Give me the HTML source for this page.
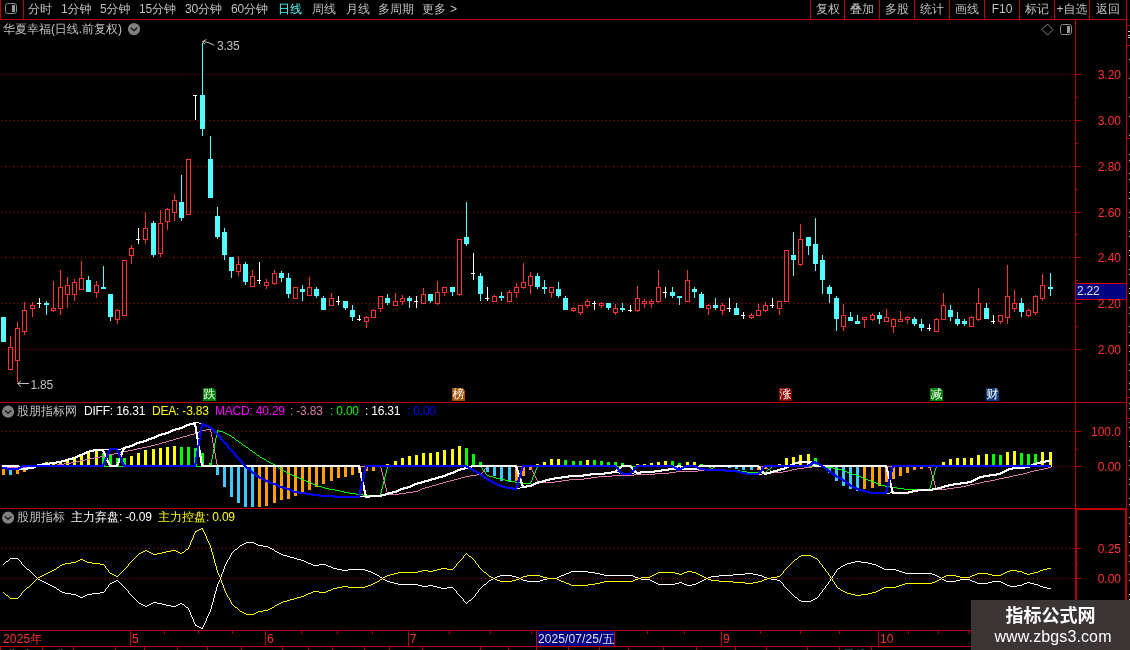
<!DOCTYPE html>
<html><head><meta charset="utf-8"><title>chart</title>
<style>
html,body{margin:0;padding:0;background:#000;}
body{width:1130px;height:650px;position:relative;overflow:hidden;font-family:"Liberation Sans","WenQuanYi Zen Hei",sans-serif;}
svg{position:absolute;left:0;top:0}
#txt{position:absolute;left:0;top:0;width:1130px;height:650px;will-change:transform}
.t{position:absolute;white-space:nowrap;font-size:12px;line-height:14px;color:#c0c0c0;}
.t i{font-style:normal;letter-spacing:-0.2px}
.ax{left:1076px;width:45px;text-align:right;color:#ff3232}
.mk{width:13px;height:13px;line-height:13px;text-align:center;color:#fff;font-size:12px}
#wm{will-change:transform;position:absolute;left:971px;top:600px;width:159px;height:50px;background:#3b3535;color:#fff;text-align:center}
#wm b{display:block;font-size:18px;line-height:20px;margin-top:6px;font-family:"Liberation Sans","Noto Sans CJK SC",sans-serif}
#wm span{display:block;font-size:16px;line-height:18px;margin-top:2px;padding-left:5px;letter-spacing:0.12px}
</style></head><body>
<svg width="1130" height="650" viewBox="0 0 1130 650" shape-rendering="crispEdges">
<defs><pattern id="dot" x="1" y="0" width="4" height="1" patternUnits="userSpaceOnUse"><rect x="0" y="0" width="1" height="1" fill="#ba0000"/></pattern></defs>
<rect x="0" y="74" width="1075" height="1" fill="url(#dot)"/>
<rect x="0" y="120" width="1075" height="1" fill="url(#dot)"/>
<rect x="0" y="166" width="1075" height="1" fill="url(#dot)"/>
<rect x="0" y="212" width="1075" height="1" fill="url(#dot)"/>
<rect x="0" y="257" width="1075" height="1" fill="url(#dot)"/>
<rect x="0" y="303" width="1075" height="1" fill="url(#dot)"/>
<rect x="0" y="349" width="1075" height="1" fill="url(#dot)"/>
<rect x="0" y="431" width="1075" height="1" fill="url(#dot)"/>
<rect x="0" y="466" width="1075" height="1" fill="url(#dot)"/>
<rect x="0" y="548" width="1075" height="1" fill="url(#dot)"/>
<rect x="0" y="578" width="1075" height="1" fill="url(#dot)"/>
<rect x="0" y="19" width="1127" height="1" fill="#ba0000"/>
<rect x="0" y="0" width="1" height="20" fill="#ba0000"/>
<rect x="23" y="0" width="1" height="20" fill="#ba0000"/>
<rect x="810" y="0" width="1" height="20" fill="#ba0000"/>
<rect x="844" y="0" width="1" height="20" fill="#ba0000"/>
<rect x="879" y="0" width="1" height="20" fill="#ba0000"/>
<rect x="914" y="0" width="1" height="20" fill="#ba0000"/>
<rect x="949" y="0" width="1" height="20" fill="#ba0000"/>
<rect x="984" y="0" width="1" height="20" fill="#ba0000"/>
<rect x="1019" y="0" width="1" height="20" fill="#ba0000"/>
<rect x="1054" y="0" width="1" height="20" fill="#ba0000"/>
<rect x="1089" y="0" width="1" height="20" fill="#ba0000"/>
<rect x="1075" y="19" width="1" height="627" fill="#ba0000"/>
<rect x="1126" y="0" width="1" height="600" fill="#ba0000"/>
<rect x="0" y="402" width="1127" height="1" fill="#ba0000"/>
<rect x="0" y="508" width="1076" height="1" fill="#ba0000"/>
<rect x="1075" y="508" width="52" height="2" fill="#ba0000"/>
<rect x="1075" y="508" width="2" height="138" fill="#ba0000"/>
<rect x="1125" y="508" width="2" height="92" fill="#ba0000"/>
<rect x="1127" y="25" width="3" height="1" fill="#ba0000"/>
<rect x="1127" y="45" width="3" height="1" fill="#ba0000"/>
<rect x="1129" y="59" width="1" height="1" fill="#c8c8c8"/>
<rect x="1129" y="160" width="1" height="1" fill="#c8c8c8"/>
<rect x="1129" y="78" width="1" height="1" fill="#c8c8c8"/>
<rect x="1129" y="179" width="1" height="1" fill="#c8c8c8"/>
<rect x="1129" y="97" width="1" height="1" fill="#c8c8c8"/>
<rect x="1129" y="198" width="1" height="1" fill="#c8c8c8"/>
<rect x="1129" y="116" width="1" height="1" fill="#c8c8c8"/>
<rect x="1129" y="217" width="1" height="1" fill="#c8c8c8"/>
<rect x="1129" y="135" width="1" height="1" fill="#c8c8c8"/>
<rect x="1129" y="236" width="1" height="1" fill="#c8c8c8"/>
<rect x="1129" y="154" width="1" height="1" fill="#c8c8c8"/>
<rect x="1129" y="255" width="1" height="1" fill="#c8c8c8"/>
<rect x="1129" y="173" width="1" height="1" fill="#c8c8c8"/>
<rect x="1129" y="274" width="1" height="1" fill="#c8c8c8"/>
<rect x="1129" y="192" width="1" height="1" fill="#c8c8c8"/>
<rect x="1129" y="293" width="1" height="1" fill="#c8c8c8"/>
<rect x="1129" y="212" width="1" height="1" fill="#c8c8c8"/>
<rect x="1129" y="313" width="1" height="1" fill="#c8c8c8"/>
<rect x="1129" y="231" width="1" height="1" fill="#c8c8c8"/>
<rect x="1129" y="332" width="1" height="1" fill="#c8c8c8"/>
<rect x="1129" y="250" width="1" height="1" fill="#c8c8c8"/>
<rect x="1129" y="351" width="1" height="1" fill="#c8c8c8"/>
<rect x="1129" y="269" width="1" height="1" fill="#c8c8c8"/>
<rect x="1129" y="370" width="1" height="1" fill="#c8c8c8"/>
<rect x="1129" y="288" width="1" height="1" fill="#c8c8c8"/>
<rect x="1129" y="389" width="1" height="1" fill="#c8c8c8"/>
<rect x="1129" y="307" width="1" height="1" fill="#c8c8c8"/>
<rect x="1129" y="408" width="1" height="1" fill="#c8c8c8"/>
<rect x="1129" y="326" width="1" height="1" fill="#c8c8c8"/>
<rect x="1129" y="427" width="1" height="1" fill="#c8c8c8"/>
<rect x="1129" y="345" width="1" height="1" fill="#c8c8c8"/>
<rect x="1129" y="446" width="1" height="1" fill="#c8c8c8"/>
<rect x="1129" y="364" width="1" height="1" fill="#c8c8c8"/>
<rect x="1129" y="465" width="1" height="1" fill="#c8c8c8"/>
<rect x="1129" y="383" width="1" height="1" fill="#c8c8c8"/>
<rect x="1129" y="484" width="1" height="1" fill="#c8c8c8"/>
<rect x="1129" y="403" width="1" height="1" fill="#c8c8c8"/>
<rect x="1129" y="504" width="1" height="1" fill="#c8c8c8"/>
<rect x="1129" y="422" width="1" height="1" fill="#c8c8c8"/>
<rect x="1129" y="523" width="1" height="1" fill="#c8c8c8"/>
<rect x="1129" y="441" width="1" height="1" fill="#c8c8c8"/>
<rect x="1129" y="542" width="1" height="1" fill="#c8c8c8"/>
<rect x="1129" y="460" width="1" height="1" fill="#c8c8c8"/>
<rect x="1129" y="561" width="1" height="1" fill="#c8c8c8"/>
<rect x="1129" y="479" width="1" height="1" fill="#c8c8c8"/>
<rect x="1129" y="580" width="1" height="1" fill="#c8c8c8"/>
<rect x="1129" y="498" width="1" height="1" fill="#c8c8c8"/>
<rect x="1129" y="599" width="1" height="1" fill="#c8c8c8"/>
<rect x="1129" y="517" width="1" height="1" fill="#c8c8c8"/>
<rect x="1129" y="536" width="1" height="1" fill="#c8c8c8"/>
<rect x="1129" y="555" width="1" height="1" fill="#c8c8c8"/>
<rect x="1129" y="574" width="1" height="1" fill="#c8c8c8"/>
<rect x="1129" y="594" width="1" height="1" fill="#c8c8c8"/>
<rect x="1127" y="138" width="3" height="1" fill="#ba0000"/>
<rect x="1127" y="397" width="3" height="1" fill="#ba0000"/>
<rect x="1127" y="418" width="3" height="1" fill="#ba0000"/>
<rect x="1128" y="31" width="2" height="1" fill="#c8c8c8"/>
<rect x="1128" y="35" width="2" height="1" fill="#c8c8c8"/>
<rect x="1128" y="37" width="2" height="1" fill="#c8c8c8"/>
<rect x="0" y="630" width="1130" height="1" fill="#ba0000"/>
<rect x="0" y="646" width="1130" height="1" fill="#ba0000"/>
<rect x="1075" y="74" width="6" height="1" fill="#ba0000"/>
<rect x="1075" y="120" width="6" height="1" fill="#ba0000"/>
<rect x="1075" y="166" width="6" height="1" fill="#ba0000"/>
<rect x="1075" y="212" width="6" height="1" fill="#ba0000"/>
<rect x="1075" y="257" width="6" height="1" fill="#ba0000"/>
<rect x="1075" y="303" width="6" height="1" fill="#ba0000"/>
<rect x="1075" y="349" width="6" height="1" fill="#ba0000"/>
<rect x="1075" y="97" width="3" height="1" fill="#ba0000"/>
<rect x="1075" y="143" width="3" height="1" fill="#ba0000"/>
<rect x="1075" y="189" width="3" height="1" fill="#ba0000"/>
<rect x="1075" y="234" width="3" height="1" fill="#ba0000"/>
<rect x="1075" y="280" width="3" height="1" fill="#ba0000"/>
<rect x="1075" y="326" width="3" height="1" fill="#ba0000"/>
<rect x="1075" y="431" width="6" height="1" fill="#ba0000"/>
<rect x="1075" y="466" width="6" height="1" fill="#ba0000"/>
<rect x="1075" y="449" width="3" height="1" fill="#ba0000"/>
<rect x="1076" y="548" width="5" height="1" fill="#ba0000"/>
<rect x="1076" y="578" width="5" height="1" fill="#ba0000"/>
<rect x="1076" y="563" width="2" height="1" fill="#ba0000"/>
<rect x="3" y="317" width="1" height="25" fill="#54ffff"/>
<rect x="1" y="317" width="5" height="25" fill="#54ffff"/>
<rect x="10" y="336" width="1" height="11" fill="#ff3232"/>
<rect x="8.5" y="347.5" width="4" height="22" fill="none" stroke="#ff3232" stroke-width="1"/>
<rect x="17" y="322" width="1" height="6" fill="#ff3232"/>
<rect x="17" y="361" width="1" height="21" fill="#ff3232"/>
<rect x="15.5" y="328.5" width="4" height="32" fill="none" stroke="#ff3232" stroke-width="1"/>
<rect x="24" y="302" width="1" height="8" fill="#ff3232"/>
<rect x="24" y="332" width="1" height="3" fill="#ff3232"/>
<rect x="22.5" y="310.5" width="4" height="21" fill="none" stroke="#ff3232" stroke-width="1"/>
<rect x="32" y="302" width="1" height="3" fill="#ff3232"/>
<rect x="32" y="309" width="1" height="8" fill="#ff3232"/>
<rect x="30.5" y="305.5" width="4" height="3" fill="none" stroke="#ff3232" stroke-width="1"/>
<rect x="39" y="298" width="1" height="10" fill="#fff"/>
<rect x="37" y="303" width="4" height="1" fill="#fff"/>
<rect x="46" y="301" width="1" height="14" fill="#54ffff"/>
<rect x="44" y="303" width="5" height="2" fill="#54ffff"/>
<rect x="53" y="281" width="1" height="27" fill="#ff3232"/>
<rect x="53" y="311" width="1" height="1" fill="#ff3232"/>
<rect x="51.5" y="308.5" width="4" height="2" fill="none" stroke="#ff3232" stroke-width="1"/>
<rect x="60" y="270" width="1" height="17" fill="#ff3232"/>
<rect x="60" y="309" width="1" height="6" fill="#ff3232"/>
<rect x="58.5" y="287.5" width="4" height="21" fill="none" stroke="#ff3232" stroke-width="1"/>
<rect x="67" y="277" width="1" height="8" fill="#ff3232"/>
<rect x="67" y="295" width="1" height="13" fill="#ff3232"/>
<rect x="65.5" y="285.5" width="4" height="9" fill="none" stroke="#ff3232" stroke-width="1"/>
<rect x="74" y="279" width="1" height="3" fill="#ff3232"/>
<rect x="74" y="295" width="1" height="6" fill="#ff3232"/>
<rect x="72.5" y="282.5" width="4" height="12" fill="none" stroke="#ff3232" stroke-width="1"/>
<rect x="81" y="261" width="1" height="17" fill="#ff3232"/>
<rect x="79.5" y="278.5" width="4" height="11" fill="none" stroke="#ff3232" stroke-width="1"/>
<rect x="88" y="276" width="1" height="16" fill="#54ffff"/>
<rect x="86" y="280" width="5" height="12" fill="#54ffff"/>
<rect x="96" y="281" width="1" height="4" fill="#ff3232"/>
<rect x="96" y="293" width="1" height="5" fill="#ff3232"/>
<rect x="94.5" y="285.5" width="4" height="7" fill="none" stroke="#ff3232" stroke-width="1"/>
<rect x="103" y="266" width="1" height="23" fill="#54ffff"/>
<rect x="101" y="287" width="5" height="2" fill="#54ffff"/>
<rect x="110" y="294" width="1" height="27" fill="#54ffff"/>
<rect x="108" y="294" width="5" height="23" fill="#54ffff"/>
<rect x="117" y="309" width="1" height="1" fill="#ff3232"/>
<rect x="117" y="320" width="1" height="4" fill="#ff3232"/>
<rect x="115.5" y="310.5" width="4" height="9" fill="none" stroke="#ff3232" stroke-width="1"/>
<rect x="122.5" y="260.5" width="4" height="55" fill="none" stroke="#ff3232" stroke-width="1"/>
<rect x="131" y="245" width="1" height="3" fill="#ff3232"/>
<rect x="131" y="256" width="1" height="8" fill="#ff3232"/>
<rect x="129.5" y="248.5" width="4" height="7" fill="none" stroke="#ff3232" stroke-width="1"/>
<rect x="138" y="228" width="1" height="16" fill="#fff"/>
<rect x="136" y="239" width="4" height="1" fill="#fff"/>
<rect x="145" y="212" width="1" height="16" fill="#ff3232"/>
<rect x="145" y="240" width="1" height="4" fill="#ff3232"/>
<rect x="143.5" y="228.5" width="4" height="11" fill="none" stroke="#ff3232" stroke-width="1"/>
<rect x="153" y="221" width="1" height="36" fill="#54ffff"/>
<rect x="151" y="223" width="5" height="32" fill="#54ffff"/>
<rect x="160" y="210" width="1" height="13" fill="#ff3232"/>
<rect x="160" y="254" width="1" height="3" fill="#ff3232"/>
<rect x="158.5" y="223.5" width="4" height="30" fill="none" stroke="#ff3232" stroke-width="1"/>
<rect x="167" y="208" width="1" height="1" fill="#ff3232"/>
<rect x="167" y="222" width="1" height="8" fill="#ff3232"/>
<rect x="165.5" y="209.5" width="4" height="12" fill="none" stroke="#ff3232" stroke-width="1"/>
<rect x="174" y="194" width="1" height="6" fill="#ff3232"/>
<rect x="174" y="213" width="1" height="8" fill="#ff3232"/>
<rect x="172.5" y="200.5" width="4" height="12" fill="none" stroke="#ff3232" stroke-width="1"/>
<rect x="181" y="175" width="1" height="46" fill="#54ffff"/>
<rect x="179" y="202" width="5" height="16" fill="#54ffff"/>
<rect x="186.5" y="159.5" width="4" height="55" fill="none" stroke="#ff3232" stroke-width="1"/>
<rect x="195" y="95" width="1" height="25" fill="#fff"/>
<rect x="193" y="95" width="4" height="1" fill="#fff"/>
<rect x="202" y="43" width="1" height="93" fill="#54ffff"/>
<rect x="200" y="95" width="5" height="34" fill="#54ffff"/>
<rect x="210" y="136" width="1" height="62" fill="#54ffff"/>
<rect x="208" y="159" width="5" height="39" fill="#54ffff"/>
<rect x="217" y="207" width="1" height="32" fill="#54ffff"/>
<rect x="215" y="216" width="5" height="21" fill="#54ffff"/>
<rect x="224" y="228" width="1" height="32" fill="#54ffff"/>
<rect x="222" y="232" width="5" height="23" fill="#54ffff"/>
<rect x="231" y="257" width="1" height="21" fill="#54ffff"/>
<rect x="229" y="257" width="5" height="14" fill="#54ffff"/>
<rect x="238" y="256" width="1" height="8" fill="#ff3232"/>
<rect x="238" y="272" width="1" height="4" fill="#ff3232"/>
<rect x="236.5" y="264.5" width="4" height="7" fill="none" stroke="#ff3232" stroke-width="1"/>
<rect x="245" y="262" width="1" height="23" fill="#54ffff"/>
<rect x="243" y="264" width="5" height="18" fill="#54ffff"/>
<rect x="252" y="270" width="1" height="6" fill="#ff3232"/>
<rect x="250.5" y="276.5" width="4" height="10" fill="none" stroke="#ff3232" stroke-width="1"/>
<rect x="259" y="262" width="1" height="22" fill="#fff"/>
<rect x="257" y="280" width="4" height="1" fill="#fff"/>
<rect x="266" y="279" width="1" height="3" fill="#ff3232"/>
<rect x="266" y="286" width="1" height="3" fill="#ff3232"/>
<rect x="264.5" y="282.5" width="4" height="3" fill="none" stroke="#ff3232" stroke-width="1"/>
<rect x="274" y="270" width="1" height="3" fill="#ff3232"/>
<rect x="274" y="284" width="1" height="1" fill="#ff3232"/>
<rect x="272.5" y="273.5" width="4" height="10" fill="none" stroke="#ff3232" stroke-width="1"/>
<rect x="281" y="271" width="1" height="11" fill="#54ffff"/>
<rect x="279" y="273" width="5" height="5" fill="#54ffff"/>
<rect x="288" y="273" width="1" height="25" fill="#54ffff"/>
<rect x="286" y="278" width="5" height="16" fill="#54ffff"/>
<rect x="293.5" y="287.5" width="4" height="11" fill="none" stroke="#ff3232" stroke-width="1"/>
<rect x="302" y="285" width="1" height="16" fill="#54ffff"/>
<rect x="300" y="289" width="5" height="3" fill="#54ffff"/>
<rect x="309" y="277" width="1" height="10" fill="#ff3232"/>
<rect x="307.5" y="287.5" width="4" height="8" fill="none" stroke="#ff3232" stroke-width="1"/>
<rect x="316" y="287" width="1" height="11" fill="#54ffff"/>
<rect x="314" y="289" width="5" height="7" fill="#54ffff"/>
<rect x="323" y="296" width="1" height="14" fill="#54ffff"/>
<rect x="321" y="298" width="5" height="12" fill="#54ffff"/>
<rect x="331" y="293" width="1" height="5" fill="#ff3232"/>
<rect x="329.5" y="298.5" width="4" height="7" fill="none" stroke="#ff3232" stroke-width="1"/>
<rect x="338" y="296" width="1" height="9" fill="#fff"/>
<rect x="336" y="301" width="4" height="1" fill="#fff"/>
<rect x="345" y="301" width="1" height="9" fill="#54ffff"/>
<rect x="343" y="301" width="5" height="7" fill="#54ffff"/>
<rect x="352" y="305" width="1" height="16" fill="#54ffff"/>
<rect x="350" y="310" width="5" height="7" fill="#54ffff"/>
<rect x="359" y="315" width="1" height="6" fill="#fff"/>
<rect x="357" y="319" width="4" height="1" fill="#fff"/>
<rect x="366" y="316" width="1" height="1" fill="#ff3232"/>
<rect x="366" y="322" width="1" height="6" fill="#ff3232"/>
<rect x="364.5" y="317.5" width="4" height="4" fill="none" stroke="#ff3232" stroke-width="1"/>
<rect x="373" y="309" width="1" height="1" fill="#ff3232"/>
<rect x="371.5" y="310.5" width="4" height="7" fill="none" stroke="#ff3232" stroke-width="1"/>
<rect x="380" y="309" width="1" height="3" fill="#ff3232"/>
<rect x="378.5" y="296.5" width="4" height="12" fill="none" stroke="#ff3232" stroke-width="1"/>
<rect x="387" y="294" width="1" height="11" fill="#54ffff"/>
<rect x="385" y="298" width="5" height="5" fill="#54ffff"/>
<rect x="395" y="293" width="1" height="8" fill="#ff3232"/>
<rect x="393.5" y="301.5" width="4" height="4" fill="none" stroke="#ff3232" stroke-width="1"/>
<rect x="402" y="295" width="1" height="3" fill="#ff3232"/>
<rect x="402" y="302" width="1" height="3" fill="#ff3232"/>
<rect x="400.5" y="298.5" width="4" height="3" fill="none" stroke="#ff3232" stroke-width="1"/>
<rect x="409" y="296" width="1" height="12" fill="#54ffff"/>
<rect x="407" y="298" width="5" height="3" fill="#54ffff"/>
<rect x="416" y="296" width="1" height="12" fill="#fff"/>
<rect x="414" y="301" width="4" height="1" fill="#fff"/>
<rect x="423" y="288" width="1" height="6" fill="#ff3232"/>
<rect x="421.5" y="294.5" width="4" height="9" fill="none" stroke="#ff3232" stroke-width="1"/>
<rect x="430" y="294" width="1" height="9" fill="#54ffff"/>
<rect x="428" y="294" width="5" height="7" fill="#54ffff"/>
<rect x="437" y="281" width="1" height="11" fill="#ff3232"/>
<rect x="437" y="304" width="1" height="1" fill="#ff3232"/>
<rect x="435.5" y="292.5" width="4" height="11" fill="none" stroke="#ff3232" stroke-width="1"/>
<rect x="444" y="293" width="1" height="3" fill="#ff3232"/>
<rect x="442.5" y="287.5" width="4" height="5" fill="none" stroke="#ff3232" stroke-width="1"/>
<rect x="452" y="287" width="1" height="9" fill="#54ffff"/>
<rect x="450" y="287" width="5" height="5" fill="#54ffff"/>
<rect x="459" y="295" width="1" height="1" fill="#ff3232"/>
<rect x="457.5" y="239.5" width="4" height="55" fill="none" stroke="#ff3232" stroke-width="1"/>
<rect x="466" y="202" width="1" height="44" fill="#54ffff"/>
<rect x="464" y="237" width="5" height="7" fill="#54ffff"/>
<rect x="473" y="253" width="1" height="27" fill="#fff"/>
<rect x="471" y="273" width="4" height="1" fill="#fff"/>
<rect x="480" y="273" width="1" height="28" fill="#54ffff"/>
<rect x="478" y="276" width="5" height="18" fill="#54ffff"/>
<rect x="487" y="287" width="1" height="14" fill="#fff"/>
<rect x="485" y="298" width="4" height="1" fill="#fff"/>
<rect x="494" y="295" width="1" height="1" fill="#ff3232"/>
<rect x="492.5" y="296.5" width="4" height="5" fill="none" stroke="#ff3232" stroke-width="1"/>
<rect x="501" y="292" width="1" height="9" fill="#54ffff"/>
<rect x="499" y="296" width="5" height="2" fill="#54ffff"/>
<rect x="509" y="290" width="1" height="2" fill="#ff3232"/>
<rect x="507.5" y="292.5" width="4" height="9" fill="none" stroke="#ff3232" stroke-width="1"/>
<rect x="516" y="283" width="1" height="4" fill="#ff3232"/>
<rect x="516" y="293" width="1" height="5" fill="#ff3232"/>
<rect x="514.5" y="287.5" width="4" height="5" fill="none" stroke="#ff3232" stroke-width="1"/>
<rect x="523" y="263" width="1" height="19" fill="#ff3232"/>
<rect x="523" y="288" width="1" height="1" fill="#ff3232"/>
<rect x="521.5" y="282.5" width="4" height="5" fill="none" stroke="#ff3232" stroke-width="1"/>
<rect x="530" y="272" width="1" height="4" fill="#ff3232"/>
<rect x="530" y="286" width="1" height="8" fill="#ff3232"/>
<rect x="528.5" y="276.5" width="4" height="9" fill="none" stroke="#ff3232" stroke-width="1"/>
<rect x="537" y="273" width="1" height="16" fill="#54ffff"/>
<rect x="535" y="276" width="5" height="11" fill="#54ffff"/>
<rect x="544" y="280" width="1" height="14" fill="#54ffff"/>
<rect x="542" y="287" width="5" height="2" fill="#54ffff"/>
<rect x="551" y="293" width="1" height="5" fill="#ff3232"/>
<rect x="549.5" y="287.5" width="4" height="5" fill="none" stroke="#ff3232" stroke-width="1"/>
<rect x="558" y="282" width="1" height="16" fill="#54ffff"/>
<rect x="556" y="289" width="5" height="7" fill="#54ffff"/>
<rect x="565" y="296" width="1" height="14" fill="#54ffff"/>
<rect x="563" y="298" width="5" height="12" fill="#54ffff"/>
<rect x="573" y="307" width="1" height="1" fill="#ff3232"/>
<rect x="573" y="311" width="1" height="1" fill="#ff3232"/>
<rect x="571.5" y="308.5" width="4" height="2" fill="none" stroke="#ff3232" stroke-width="1"/>
<rect x="580" y="313" width="1" height="2" fill="#ff3232"/>
<rect x="578.5" y="305.5" width="4" height="7" fill="none" stroke="#ff3232" stroke-width="1"/>
<rect x="587" y="299" width="1" height="2" fill="#ff3232"/>
<rect x="587" y="306" width="1" height="2" fill="#ff3232"/>
<rect x="585.5" y="301.5" width="4" height="4" fill="none" stroke="#ff3232" stroke-width="1"/>
<rect x="594" y="301" width="1" height="9" fill="#fff"/>
<rect x="592" y="303" width="4" height="1" fill="#fff"/>
<rect x="601" y="302" width="1" height="1" fill="#ff3232"/>
<rect x="601" y="306" width="1" height="2" fill="#ff3232"/>
<rect x="599.5" y="303.5" width="4" height="2" fill="none" stroke="#ff3232" stroke-width="1"/>
<rect x="608" y="303" width="1" height="7" fill="#54ffff"/>
<rect x="606" y="303" width="5" height="5" fill="#54ffff"/>
<rect x="615" y="304" width="1" height="4" fill="#ff3232"/>
<rect x="615" y="313" width="1" height="2" fill="#ff3232"/>
<rect x="613.5" y="308.5" width="4" height="4" fill="none" stroke="#ff3232" stroke-width="1"/>
<rect x="622" y="303" width="1" height="9" fill="#54ffff"/>
<rect x="620" y="308" width="5" height="2" fill="#54ffff"/>
<rect x="630" y="305" width="1" height="7" fill="#fff"/>
<rect x="628" y="310" width="4" height="1" fill="#fff"/>
<rect x="637" y="286" width="1" height="12" fill="#ff3232"/>
<rect x="637" y="311" width="1" height="1" fill="#ff3232"/>
<rect x="635.5" y="298.5" width="4" height="12" fill="none" stroke="#ff3232" stroke-width="1"/>
<rect x="644" y="299" width="1" height="2" fill="#ff3232"/>
<rect x="644" y="304" width="1" height="4" fill="#ff3232"/>
<rect x="642.5" y="301.5" width="4" height="2" fill="none" stroke="#ff3232" stroke-width="1"/>
<rect x="651" y="299" width="1" height="2" fill="#ff3232"/>
<rect x="651" y="304" width="1" height="4" fill="#ff3232"/>
<rect x="649.5" y="301.5" width="4" height="2" fill="none" stroke="#ff3232" stroke-width="1"/>
<rect x="658" y="270" width="1" height="17" fill="#ff3232"/>
<rect x="658" y="302" width="1" height="1" fill="#ff3232"/>
<rect x="656.5" y="287.5" width="4" height="14" fill="none" stroke="#ff3232" stroke-width="1"/>
<rect x="665" y="287" width="1" height="11" fill="#fff"/>
<rect x="663" y="292" width="4" height="1" fill="#fff"/>
<rect x="672" y="287" width="1" height="11" fill="#54ffff"/>
<rect x="670" y="292" width="5" height="4" fill="#54ffff"/>
<rect x="679" y="296" width="1" height="9" fill="#54ffff"/>
<rect x="677" y="296" width="5" height="2" fill="#54ffff"/>
<rect x="687" y="270" width="1" height="10" fill="#ff3232"/>
<rect x="685.5" y="280.5" width="4" height="21" fill="none" stroke="#ff3232" stroke-width="1"/>
<rect x="694" y="287" width="1" height="11" fill="#54ffff"/>
<rect x="692" y="289" width="5" height="3" fill="#54ffff"/>
<rect x="701" y="292" width="1" height="16" fill="#54ffff"/>
<rect x="699" y="294" width="5" height="14" fill="#54ffff"/>
<rect x="708" y="304" width="1" height="1" fill="#ff3232"/>
<rect x="708" y="309" width="1" height="6" fill="#ff3232"/>
<rect x="706.5" y="305.5" width="4" height="3" fill="none" stroke="#ff3232" stroke-width="1"/>
<rect x="715" y="298" width="1" height="12" fill="#54ffff"/>
<rect x="713" y="305" width="5" height="3" fill="#54ffff"/>
<rect x="722" y="303" width="1" height="2" fill="#ff3232"/>
<rect x="722" y="311" width="1" height="4" fill="#ff3232"/>
<rect x="720.5" y="305.5" width="4" height="5" fill="none" stroke="#ff3232" stroke-width="1"/>
<rect x="729" y="298" width="1" height="14" fill="#fff"/>
<rect x="727" y="308" width="4" height="1" fill="#fff"/>
<rect x="736" y="303" width="1" height="12" fill="#54ffff"/>
<rect x="734" y="308" width="5" height="7" fill="#54ffff"/>
<rect x="743" y="312" width="1" height="7" fill="#fff"/>
<rect x="741" y="315" width="4" height="1" fill="#fff"/>
<rect x="751" y="313" width="1" height="2" fill="#ff3232"/>
<rect x="751" y="318" width="1" height="1" fill="#ff3232"/>
<rect x="749.5" y="315.5" width="4" height="2" fill="none" stroke="#ff3232" stroke-width="1"/>
<rect x="758" y="304" width="1" height="6" fill="#ff3232"/>
<rect x="756.5" y="310.5" width="4" height="5" fill="none" stroke="#ff3232" stroke-width="1"/>
<rect x="765" y="302" width="1" height="3" fill="#ff3232"/>
<rect x="765" y="311" width="1" height="1" fill="#ff3232"/>
<rect x="763.5" y="305.5" width="4" height="5" fill="none" stroke="#ff3232" stroke-width="1"/>
<rect x="772" y="298" width="1" height="10" fill="#fff"/>
<rect x="770" y="305" width="4" height="1" fill="#fff"/>
<rect x="779" y="309" width="1" height="6" fill="#ff3232"/>
<rect x="777.5" y="301.5" width="4" height="7" fill="none" stroke="#ff3232" stroke-width="1"/>
<rect x="784.5" y="250.5" width="4" height="51" fill="none" stroke="#ff3232" stroke-width="1"/>
<rect x="793" y="232" width="1" height="44" fill="#54ffff"/>
<rect x="791" y="255" width="5" height="5" fill="#54ffff"/>
<rect x="800" y="224" width="1" height="15" fill="#ff3232"/>
<rect x="800" y="265" width="1" height="1" fill="#ff3232"/>
<rect x="798.5" y="239.5" width="4" height="25" fill="none" stroke="#ff3232" stroke-width="1"/>
<rect x="808" y="237" width="1" height="18" fill="#54ffff"/>
<rect x="806" y="237" width="5" height="9" fill="#54ffff"/>
<rect x="815" y="218" width="1" height="53" fill="#54ffff"/>
<rect x="813" y="244" width="5" height="20" fill="#54ffff"/>
<rect x="822" y="255" width="1" height="39" fill="#54ffff"/>
<rect x="820" y="260" width="5" height="20" fill="#54ffff"/>
<rect x="829" y="285" width="1" height="18" fill="#54ffff"/>
<rect x="827" y="287" width="5" height="7" fill="#54ffff"/>
<rect x="836" y="296" width="1" height="35" fill="#54ffff"/>
<rect x="834" y="298" width="5" height="21" fill="#54ffff"/>
<rect x="843" y="304" width="1" height="11" fill="#ff3232"/>
<rect x="843" y="327" width="1" height="4" fill="#ff3232"/>
<rect x="841.5" y="315.5" width="4" height="11" fill="none" stroke="#ff3232" stroke-width="1"/>
<rect x="850" y="312" width="1" height="9" fill="#54ffff"/>
<rect x="848" y="317" width="5" height="4" fill="#54ffff"/>
<rect x="857" y="315" width="1" height="9" fill="#54ffff"/>
<rect x="855" y="321" width="5" height="3" fill="#54ffff"/>
<rect x="864" y="320" width="1" height="8" fill="#ff3232"/>
<rect x="862.5" y="317.5" width="4" height="2" fill="none" stroke="#ff3232" stroke-width="1"/>
<rect x="872" y="313" width="1" height="2" fill="#ff3232"/>
<rect x="872" y="320" width="1" height="1" fill="#ff3232"/>
<rect x="870.5" y="315.5" width="4" height="4" fill="none" stroke="#ff3232" stroke-width="1"/>
<rect x="879" y="312" width="1" height="12" fill="#54ffff"/>
<rect x="877" y="315" width="5" height="4" fill="#54ffff"/>
<rect x="886" y="309" width="1" height="8" fill="#ff3232"/>
<rect x="884.5" y="317.5" width="4" height="4" fill="none" stroke="#ff3232" stroke-width="1"/>
<rect x="893" y="318" width="1" height="1" fill="#ff3232"/>
<rect x="893" y="327" width="1" height="6" fill="#ff3232"/>
<rect x="891.5" y="319.5" width="4" height="7" fill="none" stroke="#ff3232" stroke-width="1"/>
<rect x="900" y="311" width="1" height="8" fill="#ff3232"/>
<rect x="898.5" y="319.5" width="4" height="2" fill="none" stroke="#ff3232" stroke-width="1"/>
<rect x="907" y="316" width="1" height="1" fill="#ff3232"/>
<rect x="907" y="320" width="1" height="4" fill="#ff3232"/>
<rect x="905.5" y="317.5" width="4" height="2" fill="none" stroke="#ff3232" stroke-width="1"/>
<rect x="914" y="317" width="1" height="9" fill="#54ffff"/>
<rect x="912" y="319" width="5" height="5" fill="#54ffff"/>
<rect x="921" y="319" width="1" height="12" fill="#54ffff"/>
<rect x="919" y="324" width="5" height="4" fill="#54ffff"/>
<rect x="929" y="324" width="1" height="7" fill="#fff"/>
<rect x="927" y="328" width="4" height="1" fill="#fff"/>
<rect x="936" y="318" width="1" height="1" fill="#ff3232"/>
<rect x="934.5" y="319.5" width="4" height="12" fill="none" stroke="#ff3232" stroke-width="1"/>
<rect x="943" y="293" width="1" height="12" fill="#ff3232"/>
<rect x="941.5" y="305.5" width="4" height="14" fill="none" stroke="#ff3232" stroke-width="1"/>
<rect x="950" y="305" width="1" height="16" fill="#54ffff"/>
<rect x="948" y="310" width="5" height="7" fill="#54ffff"/>
<rect x="957" y="312" width="1" height="14" fill="#54ffff"/>
<rect x="955" y="319" width="5" height="5" fill="#54ffff"/>
<rect x="964" y="319" width="1" height="7" fill="#54ffff"/>
<rect x="962" y="321" width="5" height="3" fill="#54ffff"/>
<rect x="971" y="316" width="1" height="1" fill="#ff3232"/>
<rect x="969.5" y="317.5" width="4" height="9" fill="none" stroke="#ff3232" stroke-width="1"/>
<rect x="978" y="288" width="1" height="15" fill="#ff3232"/>
<rect x="978" y="320" width="1" height="1" fill="#ff3232"/>
<rect x="976.5" y="303.5" width="4" height="16" fill="none" stroke="#ff3232" stroke-width="1"/>
<rect x="986" y="303" width="1" height="16" fill="#54ffff"/>
<rect x="984" y="308" width="5" height="11" fill="#54ffff"/>
<rect x="993" y="315" width="1" height="9" fill="#fff"/>
<rect x="991" y="321" width="4" height="1" fill="#fff"/>
<rect x="1000" y="322" width="1" height="2" fill="#ff3232"/>
<rect x="998.5" y="315.5" width="4" height="6" fill="none" stroke="#ff3232" stroke-width="1"/>
<rect x="1007" y="265" width="1" height="31" fill="#ff3232"/>
<rect x="1007" y="318" width="1" height="6" fill="#ff3232"/>
<rect x="1005.5" y="296.5" width="4" height="21" fill="none" stroke="#ff3232" stroke-width="1"/>
<rect x="1014" y="290" width="1" height="13" fill="#ff3232"/>
<rect x="1014" y="309" width="1" height="3" fill="#ff3232"/>
<rect x="1012.5" y="303.5" width="4" height="5" fill="none" stroke="#ff3232" stroke-width="1"/>
<rect x="1021" y="298" width="1" height="19" fill="#54ffff"/>
<rect x="1019" y="303" width="5" height="9" fill="#54ffff"/>
<rect x="1028" y="309" width="1" height="1" fill="#ff3232"/>
<rect x="1028" y="316" width="1" height="1" fill="#ff3232"/>
<rect x="1026.5" y="310.5" width="4" height="5" fill="none" stroke="#ff3232" stroke-width="1"/>
<rect x="1035" y="295" width="1" height="1" fill="#ff3232"/>
<rect x="1035" y="313" width="1" height="2" fill="#ff3232"/>
<rect x="1033.5" y="296.5" width="4" height="16" fill="none" stroke="#ff3232" stroke-width="1"/>
<rect x="1042" y="274" width="1" height="11" fill="#ff3232"/>
<rect x="1042" y="299" width="1" height="2" fill="#ff3232"/>
<rect x="1040.5" y="285.5" width="4" height="13" fill="none" stroke="#ff3232" stroke-width="1"/>
<rect x="1050" y="273" width="1" height="23" fill="#54ffff"/>
<rect x="1048" y="287" width="5" height="2" fill="#54ffff"/>
<rect x="2" y="466" width="3" height="9" fill="#ffa000"/>
<rect x="9" y="466" width="3" height="9" fill="#3ccaff"/>
<rect x="16" y="466" width="3" height="8" fill="#ffa000"/>
<rect x="23" y="466" width="3" height="6" fill="#ffa000"/>
<rect x="31" y="466" width="3" height="2" fill="#ffa000"/>
<rect x="45" y="462" width="3" height="5" fill="#ffff00"/>
<rect x="52" y="462" width="3" height="5" fill="#ffff00"/>
<rect x="59" y="461" width="3" height="6" fill="#ffff00"/>
<rect x="66" y="460" width="3" height="7" fill="#ffff00"/>
<rect x="73" y="458" width="3" height="9" fill="#ffff00"/>
<rect x="80" y="456" width="3" height="11" fill="#ffff00"/>
<rect x="87" y="453" width="3" height="14" fill="#ffff00"/>
<rect x="95" y="451" width="3" height="16" fill="#ffff00"/>
<rect x="102" y="453" width="3" height="14" fill="#00ff00"/>
<rect x="109" y="455" width="3" height="12" fill="#00ff00"/>
<rect x="116" y="458" width="3" height="9" fill="#00ff00"/>
<rect x="123" y="458" width="3" height="9" fill="#00ff00"/>
<rect x="130" y="456" width="3" height="11" fill="#ffff00"/>
<rect x="137" y="453" width="3" height="14" fill="#ffff00"/>
<rect x="144" y="450" width="3" height="17" fill="#ffff00"/>
<rect x="152" y="449" width="3" height="18" fill="#ffff00"/>
<rect x="159" y="448" width="3" height="19" fill="#ffff00"/>
<rect x="166" y="447" width="3" height="20" fill="#ffff00"/>
<rect x="173" y="446" width="3" height="21" fill="#ffff00"/>
<rect x="180" y="447" width="3" height="20" fill="#00ff00"/>
<rect x="187" y="447" width="3" height="20" fill="#00ff00"/>
<rect x="194" y="448" width="3" height="19" fill="#00ff00"/>
<rect x="201" y="453" width="3" height="14" fill="#00ff00"/>
<rect x="209" y="463" width="3" height="4" fill="#00ff00"/>
<rect x="216" y="466" width="3" height="9" fill="#3ccaff"/>
<rect x="223" y="466" width="3" height="21" fill="#3ccaff"/>
<rect x="230" y="466" width="3" height="31" fill="#3ccaff"/>
<rect x="237" y="466" width="3" height="37" fill="#3ccaff"/>
<rect x="244" y="466" width="3" height="41" fill="#3ccaff"/>
<rect x="251" y="466" width="3" height="41" fill="#3ccaff"/>
<rect x="258" y="466" width="3" height="41" fill="#ffa000"/>
<rect x="265" y="466" width="3" height="40" fill="#ffa000"/>
<rect x="273" y="466" width="3" height="37" fill="#ffa000"/>
<rect x="280" y="466" width="3" height="34" fill="#ffa000"/>
<rect x="287" y="466" width="3" height="33" fill="#ffa000"/>
<rect x="294" y="466" width="3" height="30" fill="#ffa000"/>
<rect x="301" y="466" width="3" height="27" fill="#ffa000"/>
<rect x="308" y="466" width="3" height="24" fill="#ffa000"/>
<rect x="315" y="466" width="3" height="21" fill="#ffa000"/>
<rect x="322" y="466" width="3" height="18" fill="#ffa000"/>
<rect x="330" y="466" width="3" height="15" fill="#ffa000"/>
<rect x="337" y="466" width="3" height="12" fill="#ffa000"/>
<rect x="344" y="466" width="3" height="11" fill="#ffa000"/>
<rect x="351" y="466" width="3" height="9" fill="#ffa000"/>
<rect x="358" y="466" width="3" height="7" fill="#ffa000"/>
<rect x="365" y="466" width="3" height="5" fill="#ffa000"/>
<rect x="372" y="466" width="3" height="5" fill="#ffa000"/>
<rect x="386" y="464" width="3" height="3" fill="#ffff00"/>
<rect x="394" y="461" width="3" height="6" fill="#ffff00"/>
<rect x="401" y="458" width="3" height="9" fill="#ffff00"/>
<rect x="408" y="456" width="3" height="11" fill="#ffff00"/>
<rect x="415" y="455" width="3" height="12" fill="#ffff00"/>
<rect x="422" y="453" width="3" height="14" fill="#ffff00"/>
<rect x="429" y="453" width="3" height="14" fill="#ffff00"/>
<rect x="436" y="452" width="3" height="15" fill="#ffff00"/>
<rect x="443" y="450" width="3" height="17" fill="#ffff00"/>
<rect x="451" y="449" width="3" height="18" fill="#ffff00"/>
<rect x="458" y="446" width="3" height="21" fill="#ffff00"/>
<rect x="465" y="448" width="3" height="19" fill="#00ff00"/>
<rect x="472" y="454" width="3" height="13" fill="#00ff00"/>
<rect x="479" y="462" width="3" height="5" fill="#00ff00"/>
<rect x="486" y="466" width="3" height="6" fill="#3ccaff"/>
<rect x="493" y="466" width="3" height="10" fill="#3ccaff"/>
<rect x="500" y="466" width="3" height="15" fill="#3ccaff"/>
<rect x="508" y="466" width="3" height="16" fill="#3ccaff"/>
<rect x="515" y="466" width="3" height="15" fill="#ffa000"/>
<rect x="522" y="466" width="3" height="10" fill="#ffa000"/>
<rect x="529" y="466" width="3" height="4" fill="#ffa000"/>
<rect x="536" y="464" width="3" height="3" fill="#ffff00"/>
<rect x="543" y="462" width="3" height="5" fill="#ffff00"/>
<rect x="550" y="459" width="3" height="8" fill="#ffff00"/>
<rect x="557" y="459" width="3" height="8" fill="#ffff00"/>
<rect x="564" y="460" width="3" height="7" fill="#00ff00"/>
<rect x="572" y="461" width="3" height="6" fill="#00ff00"/>
<rect x="579" y="461" width="3" height="6" fill="#00ff00"/>
<rect x="586" y="460" width="3" height="7" fill="#ffff00"/>
<rect x="593" y="460" width="3" height="7" fill="#00ff00"/>
<rect x="600" y="461" width="3" height="6" fill="#00ff00"/>
<rect x="607" y="462" width="3" height="5" fill="#00ff00"/>
<rect x="614" y="462" width="3" height="5" fill="#00ff00"/>
<rect x="621" y="463" width="3" height="4" fill="#00ff00"/>
<rect x="629" y="465" width="3" height="2" fill="#00ff00"/>
<rect x="636" y="464" width="3" height="3" fill="#ffff00"/>
<rect x="643" y="464" width="3" height="3" fill="#ffff00"/>
<rect x="650" y="463" width="3" height="4" fill="#ffff00"/>
<rect x="657" y="462" width="3" height="5" fill="#ffff00"/>
<rect x="664" y="461" width="3" height="6" fill="#ffff00"/>
<rect x="671" y="461" width="3" height="6" fill="#00ff00"/>
<rect x="678" y="463" width="3" height="4" fill="#00ff00"/>
<rect x="686" y="462" width="3" height="5" fill="#ffff00"/>
<rect x="693" y="462" width="3" height="5" fill="#ffff00"/>
<rect x="700" y="464" width="3" height="3" fill="#00ff00"/>
<rect x="721" y="466" width="3" height="1" fill="#3ccaff"/>
<rect x="728" y="466" width="3" height="2" fill="#3ccaff"/>
<rect x="735" y="466" width="3" height="3" fill="#3ccaff"/>
<rect x="742" y="466" width="3" height="4" fill="#3ccaff"/>
<rect x="750" y="466" width="3" height="4" fill="#3ccaff"/>
<rect x="757" y="466" width="3" height="4" fill="#ffa000"/>
<rect x="764" y="466" width="3" height="3" fill="#ffa000"/>
<rect x="778" y="464" width="3" height="3" fill="#ffff00"/>
<rect x="785" y="458" width="3" height="9" fill="#ffff00"/>
<rect x="792" y="457" width="3" height="10" fill="#ffff00"/>
<rect x="799" y="455" width="3" height="12" fill="#ffff00"/>
<rect x="807" y="454" width="3" height="13" fill="#ffff00"/>
<rect x="814" y="458" width="3" height="9" fill="#00ff00"/>
<rect x="828" y="466" width="3" height="7" fill="#3ccaff"/>
<rect x="835" y="466" width="3" height="15" fill="#3ccaff"/>
<rect x="842" y="466" width="3" height="20" fill="#3ccaff"/>
<rect x="849" y="466" width="3" height="23" fill="#3ccaff"/>
<rect x="856" y="466" width="3" height="25" fill="#3ccaff"/>
<rect x="863" y="466" width="3" height="23" fill="#ffa000"/>
<rect x="871" y="466" width="3" height="22" fill="#ffa000"/>
<rect x="878" y="466" width="3" height="20" fill="#ffa000"/>
<rect x="885" y="466" width="3" height="16" fill="#ffa000"/>
<rect x="892" y="466" width="3" height="13" fill="#ffa000"/>
<rect x="899" y="466" width="3" height="10" fill="#ffa000"/>
<rect x="906" y="466" width="3" height="7" fill="#ffa000"/>
<rect x="913" y="466" width="3" height="4" fill="#ffa000"/>
<rect x="920" y="466" width="3" height="3" fill="#ffa000"/>
<rect x="928" y="466" width="3" height="2" fill="#ffa000"/>
<rect x="942" y="462" width="3" height="5" fill="#ffff00"/>
<rect x="949" y="459" width="3" height="8" fill="#ffff00"/>
<rect x="956" y="458" width="3" height="9" fill="#ffff00"/>
<rect x="963" y="458" width="3" height="9" fill="#ffff00"/>
<rect x="970" y="458" width="3" height="9" fill="#ffff00"/>
<rect x="977" y="455" width="3" height="12" fill="#ffff00"/>
<rect x="985" y="454" width="3" height="13" fill="#ffff00"/>
<rect x="992" y="454" width="3" height="13" fill="#00ff00"/>
<rect x="999" y="455" width="3" height="12" fill="#00ff00"/>
<rect x="1006" y="452" width="3" height="15" fill="#ffff00"/>
<rect x="1013" y="451" width="3" height="16" fill="#ffff00"/>
<rect x="1020" y="453" width="3" height="14" fill="#00ff00"/>
<rect x="1027" y="454" width="3" height="13" fill="#00ff00"/>
<rect x="1034" y="454" width="3" height="13" fill="#00ff00"/>
<rect x="1041" y="452" width="3" height="15" fill="#ffff00"/>
<rect x="1049" y="452" width="3" height="15" fill="#ffff00"/>
<path d="M3 467h2v1h-2zM5 468h4v1h-4zM9 469h17v1h-17zM26 468h4v1h-4zM30 467h4v1h-4zM34 466h2v1h-2zM36 465h2v1h-2zM38 464h5v1h-5zM43 463h14v1h-14zM57 462h5v1h-5zM62 461h4v1h-4zM66 460h3v1h-3zM69 459h2v1h-2zM71 458h2v1h-2zM73 457h3v1h-3zM76 456h4v1h-4zM80 455h2v1h-2zM82 454h2v1h-2zM84 453h2v1h-2zM86 452h2v1h-2zM88 451h4v1h-4zM92 450h8v1h-8zM100 449h21v1h-21zM121 448h5v1h-5zM126 447h2v1h-2zM128 446h2v1h-2zM130 445h3v1h-3zM133 444h4v1h-4zM137 443h3v1h-3zM140 442h2v1h-2zM142 441h2v1h-2zM144 440h3v1h-3zM147 439h2v1h-2zM149 438h3v1h-3zM152 437h3v1h-3zM155 436h4v1h-4zM159 435h3v1h-3zM162 434h2v1h-2zM164 433h2v1h-2zM166 432h3v1h-3zM169 431h4v1h-4zM173 430h3v1h-3zM176 429h2v1h-2zM178 428h2v1h-2zM180 427h3v1h-3zM183 426h4v1h-4zM187 425h3v1h-3zM190 424h2v1h-2zM192 423h2v1h-2zM194 422h5v1h-5zM199 423h4v1h-4zM203 424h2v1h-2zM205 425h2v1h-2zM207 426h2v1h-2zM209 427h2v1h-2zM211 428h1v1h-1zM212 429h1v1h-1zM213 430h1v1h-1zM214 431h1v1h-1zM215 432h1v1h-1zM216 433h1v1h-1zM217 434h1v1h-1zM218 435h1v1h-1zM219 436h1v1h-1zM220 437h1v1h-1zM221 438h1v2h-1zM222 440h1v1h-1zM223 441h1v1h-1zM224 442h1v1h-1zM225 443h1v1h-1zM226 444h1v1h-1zM227 445h1v1h-1zM228 446h1v2h-1zM229 448h1v1h-1zM230 449h1v1h-1zM231 450h1v1h-1zM232 451h1v1h-1zM233 452h1v1h-1zM234 453h1v1h-1zM235 454h1v1h-1zM236 455h1v1h-1zM237 456h1v1h-1zM238 457h1v1h-1zM239 458h1v1h-1zM240 459h1v1h-1zM241 460h1v1h-1zM242 461h1v2h-1zM243 463h1v1h-1zM244 464h1v1h-1zM245 465h1v1h-1zM246 466h1v1h-1zM247 467h1v1h-1zM248 468h1v1h-1zM249 469h1v1h-1zM250 470h1v1h-1zM251 471h1v1h-1zM252 472h1v1h-1zM253 473h2v1h-2zM255 474h1v1h-1zM256 475h1v1h-1zM257 476h2v1h-2zM259 477h1v1h-1zM260 478h2v1h-2zM262 479h2v1h-2zM264 480h2v1h-2zM266 481h2v1h-2zM268 482h2v1h-2zM270 483h3v1h-3zM273 484h3v1h-3zM276 485h4v1h-4zM280 486h3v1h-3zM283 487h2v1h-2zM285 488h2v1h-2zM287 489h3v1h-3zM290 490h4v1h-4zM294 491h3v1h-3zM297 492h4v1h-4zM301 493h5v1h-5zM306 494h7v1h-7zM313 495h7v1h-7zM320 496h15v1h-15zM335 497h21v1h-21zM356 496h26v1h-26zM382 495h2v1h-2zM384 494h2v1h-2zM386 493h3v1h-3zM389 492h4v1h-4zM393 491h4v1h-4zM397 490h4v1h-4zM401 489h3v1h-3zM404 488h2v1h-2zM406 487h2v1h-2zM408 486h3v1h-3zM411 485h2v1h-2zM413 484h2v1h-2zM415 483h3v1h-3zM418 482h4v1h-4zM422 481h3v1h-3zM425 480h4v1h-4zM429 479h3v1h-3zM432 478h4v1h-4zM436 477h3v1h-3zM439 476h4v1h-4zM443 475h3v1h-3zM446 474h4v1h-4zM450 473h3v1h-3zM453 472h2v1h-2zM455 471h2v1h-2zM457 470h2v1h-2zM459 469h2v1h-2zM461 468h4v1h-4zM465 467h3v1h-3zM468 468h2v1h-2zM470 469h2v1h-2zM472 470h2v1h-2zM474 471h2v1h-2zM476 472h2v1h-2zM478 473h2v1h-2zM480 474h1v1h-1zM481 475h2v1h-2zM483 476h1v1h-1zM484 477h1v1h-1zM485 478h2v1h-2zM487 479h1v1h-1zM488 480h2v1h-2zM490 481h2v1h-2zM492 482h2v1h-2zM494 483h2v1h-2zM496 484h2v1h-2zM498 485h2v1h-2zM500 486h3v1h-3zM503 487h4v1h-4zM507 488h13v1h-13zM520 487h7v1h-7zM527 486h5v1h-5zM532 485h2v1h-2zM534 484h2v1h-2zM536 483h3v1h-3zM539 482h2v1h-2zM541 481h2v1h-2zM543 480h3v1h-3zM546 479h4v1h-4zM550 478h5v1h-5zM555 477h7v1h-7zM562 476h15v1h-15zM577 475h7v1h-7zM584 474h14v1h-14zM598 473h7v1h-7zM605 472h14v1h-14zM619 473h15v1h-15zM634 472h21v1h-21zM655 471h7v1h-7zM662 470h7v1h-7zM669 469h43v1h-43zM712 470h21v1h-21zM733 471h7v1h-7zM740 472h5v1h-5zM745 473h4v1h-4zM749 474h13v1h-13zM762 473h7v1h-7zM769 472h5v1h-5zM774 471h4v1h-4zM778 470h3v1h-3zM781 469h2v1h-2zM783 468h2v1h-2zM785 467h3v1h-3zM788 466h2v1h-2zM790 465h2v1h-2zM792 464h3v1h-3zM795 463h4v1h-4zM799 462h5v1h-5zM804 461h8v1h-8zM812 462h5v1h-5zM817 463h2v1h-2zM819 464h2v1h-2zM821 465h2v1h-2zM823 466h1v1h-1zM824 467h1v1h-1zM825 468h2v1h-2zM827 469h1v1h-1zM828 470h1v1h-1zM829 471h1v1h-1zM830 472h2v1h-2zM832 473h2v1h-2zM834 474h2v1h-2zM836 475h1v1h-1zM837 476h2v1h-2zM839 477h1v1h-1zM840 478h1v1h-1zM841 479h2v1h-2zM843 480h1v1h-1zM844 481h2v1h-2zM846 482h1v1h-1zM847 483h1v1h-1zM848 484h2v1h-2zM850 485h2v1h-2zM852 486h2v1h-2zM854 487h2v1h-2zM856 488h3v1h-3zM859 489h2v1h-2zM861 490h2v1h-2zM863 491h5v1h-5zM868 492h8v1h-8zM876 493h14v1h-14zM890 492h21v1h-21zM911 491h7v1h-7zM918 490h7v1h-7zM925 489h13v1h-13zM938 488h4v1h-4zM942 487h3v1h-3zM945 486h4v1h-4zM949 485h3v1h-3zM952 484h4v1h-4zM956 483h5v1h-5zM961 482h7v1h-7zM968 481h5v1h-5zM973 480h2v1h-2zM975 479h2v1h-2zM977 478h3v1h-3zM980 477h4v1h-4zM984 476h6v1h-6zM990 475h7v1h-7zM997 474h4v1h-4zM1001 473h2v1h-2zM1003 472h2v1h-2zM1005 471h2v1h-2zM1007 470h2v1h-2zM1009 469h4v1h-4zM1013 468h5v1h-5zM1018 467h12v1h-12zM1030 466h2v1h-2zM1032 465h2v1h-2zM1034 464h3v1h-3zM1037 463h4v1h-4zM1041 462h3v1h-3zM1044 461h4v1h-4zM1048 460h3v1h-3z" fill="#ffffff"/>
<path d="M3 467h25v1h-25zM28 466h22v1h-22zM50 465h7v1h-7zM57 464h7v1h-7zM64 463h7v1h-7zM71 462h5v1h-5zM76 461h4v1h-4zM80 460h5v1h-5zM85 459h5v1h-5zM90 458h4v1h-4zM94 457h6v1h-6zM100 456h5v1h-5zM105 455h4v1h-4zM109 454h5v1h-5zM114 453h5v1h-5zM119 452h4v1h-4zM123 451h5v1h-5zM128 450h5v1h-5zM133 449h4v1h-4zM137 448h5v1h-5zM142 447h5v1h-5zM147 446h4v1h-4zM151 445h4v1h-4zM155 444h4v1h-4zM159 443h3v1h-3zM162 442h4v1h-4zM166 441h3v1h-3zM169 440h4v1h-4zM173 439h3v1h-3zM176 438h4v1h-4zM180 437h3v1h-3zM183 436h4v1h-4zM187 435h3v1h-3zM190 434h4v1h-4zM194 433h3v1h-3zM197 432h2v1h-2zM199 431h2v1h-2zM201 430h5v1h-5zM206 429h5v1h-5zM210 430h1v2h-1zM211 432h1v5h-1zM212 437h1v6h-1zM213 443h1v5h-1zM214 448h1v5h-1zM215 453h1v6h-1zM216 459h1v5h-1zM217 464h1v2h-1zM217 466h164v1h-164zM380 467h1v1h-1zM381 468h1v4h-1zM382 472h1v4h-1zM383 476h1v4h-1zM384 480h1v4h-1zM385 484h1v4h-1zM386 488h1v4h-1zM387 492h1v2h-1zM387 494h12v1h-12zM399 493h7v1h-7zM406 492h7v1h-7zM413 491h5v1h-5zM418 490h2v1h-2zM420 489h2v1h-2zM422 488h3v1h-3zM425 487h4v1h-4zM429 486h3v1h-3zM432 485h4v1h-4zM436 484h3v1h-3zM439 483h4v1h-4zM443 482h3v1h-3zM446 481h4v1h-4zM450 480h4v1h-4zM454 479h4v1h-4zM458 478h3v1h-3zM461 477h4v1h-4zM465 476h5v1h-5zM470 475h7v1h-7zM477 474h4v1h-4zM481 473h1v1h-1zM482 472h1v1h-1zM483 471h1v1h-1zM484 469h1v2h-1zM485 468h1v1h-1zM486 467h1v1h-1zM487 466h44v1h-44zM530 467h1v1h-1zM531 468h1v2h-1zM532 470h1v2h-1zM533 472h1v2h-1zM534 474h1v2h-1zM535 476h1v2h-1zM536 478h1v2h-1zM537 480h1v1h-1zM537 481h4v1h-4zM541 482h14v1h-14zM555 481h7v1h-7zM562 480h7v1h-7zM569 479h15v1h-15zM584 478h7v1h-7zM591 477h7v1h-7zM598 476h14v1h-14zM612 475h22v1h-22zM634 474h21v1h-21zM655 473h14v1h-14zM669 472h7v1h-7zM676 471h22v1h-22zM698 470h11v1h-11zM709 469h2v1h-2zM711 468h2v1h-2zM713 467h2v1h-2zM715 466h51v1h-51zM766 467h1v1h-1zM767 468h1v1h-1zM768 469h2v1h-2zM770 470h1v1h-1zM771 471h1v1h-1zM772 472h11v1h-11zM783 471h5v1h-5zM788 470h4v1h-4zM792 469h5v1h-5zM797 468h7v1h-7zM804 467h8v1h-8zM812 466h118v1h-118zM929 467h1v1h-1zM930 468h1v3h-1zM931 471h1v4h-1zM932 475h1v3h-1zM933 478h1v3h-1zM934 481h1v4h-1zM935 485h1v3h-1zM936 488h1v1h-1zM936 489h11v1h-11zM947 488h7v1h-7zM954 487h7v1h-7zM961 486h5v1h-5zM966 485h4v1h-4zM970 484h5v1h-5zM975 483h5v1h-5zM980 482h4v1h-4zM984 481h6v1h-6zM990 480h5v1h-5zM995 479h4v1h-4zM999 478h5v1h-5zM1004 477h5v1h-5zM1009 476h4v1h-4zM1013 475h5v1h-5zM1018 474h5v1h-5zM1023 473h4v1h-4zM1027 472h3v1h-3zM1030 471h4v1h-4zM1034 470h5v1h-5zM1039 469h5v1h-5zM1044 468h4v1h-4zM1048 467h3v1h-3z" fill="#dc78aa"/>
<path d="M3 466h208v1h-208zM210 464h1v2h-1zM211 459h1v5h-1zM212 454h1v5h-1zM213 449h1v5h-1zM214 443h1v6h-1zM215 438h1v5h-1zM216 433h1v5h-1zM217 431h1v2h-1zM217 430h2v1h-2zM219 431h4v1h-4zM223 432h2v1h-2zM225 433h2v1h-2zM227 434h2v1h-2zM229 435h2v1h-2zM231 436h1v1h-1zM232 437h2v1h-2zM234 438h1v1h-1zM235 439h1v1h-1zM236 440h2v1h-2zM238 441h1v1h-1zM239 442h2v1h-2zM241 443h1v1h-1zM242 444h1v1h-1zM243 445h2v1h-2zM245 446h1v1h-1zM246 447h2v1h-2zM248 448h1v1h-1zM249 449h1v1h-1zM250 450h2v1h-2zM252 451h1v1h-1zM253 452h2v1h-2zM255 453h1v1h-1zM256 454h1v1h-1zM257 455h2v1h-2zM259 456h1v1h-1zM260 457h2v1h-2zM262 458h2v1h-2zM264 459h2v1h-2zM266 460h1v1h-1zM267 461h2v1h-2zM269 462h2v1h-2zM271 463h2v1h-2zM273 464h2v1h-2zM275 465h2v1h-2zM277 466h1v1h-1zM278 467h1v1h-1zM279 468h2v1h-2zM281 469h1v1h-1zM282 470h2v1h-2zM284 471h2v1h-2zM286 472h2v1h-2zM288 473h2v1h-2zM290 474h2v1h-2zM292 475h2v1h-2zM294 476h3v1h-3zM297 477h2v1h-2zM299 478h2v1h-2zM301 479h3v1h-3zM304 480h2v1h-2zM306 481h2v1h-2zM308 482h3v1h-3zM311 483h2v1h-2zM313 484h2v1h-2zM315 485h3v1h-3zM318 486h4v1h-4zM322 487h3v1h-3zM325 488h4v1h-4zM329 489h6v1h-6zM335 490h5v1h-5zM340 491h4v1h-4zM344 492h5v1h-5zM349 493h7v1h-7zM356 494h7v1h-7zM363 495h7v1h-7zM370 496h7v1h-7zM377 495h4v1h-4zM380 493h1v2h-1zM381 489h1v4h-1zM382 485h1v4h-1zM383 481h1v4h-1zM384 477h1v4h-1zM385 473h1v4h-1zM386 469h1v4h-1zM387 467h1v2h-1zM387 466h94v1h-94zM481 467h1v1h-1zM482 468h1v2h-1zM483 470h1v1h-1zM484 471h1v1h-1zM485 472h1v2h-1zM486 474h1v1h-1zM487 475h2v1h-2zM489 476h4v1h-4zM493 477h3v1h-3zM496 478h4v1h-4zM500 479h5v1h-5zM505 480h6v1h-6zM511 481h4v1h-4zM515 482h5v1h-5zM520 483h11v1h-11zM530 482h1v1h-1zM531 480h1v2h-1zM532 477h1v3h-1zM533 475h1v2h-1zM534 473h1v2h-1zM535 470h1v3h-1zM536 468h1v2h-1zM537 467h1v1h-1zM537 466h172v1h-172zM709 467h2v1h-2zM711 468h2v1h-2zM713 469h2v1h-2zM715 470h25v1h-25zM740 471h7v1h-7zM747 472h19v1h-19zM766 471h1v1h-1zM767 470h1v1h-1zM768 469h2v1h-2zM770 468h1v1h-1zM771 467h1v1h-1zM772 466h40v1h-40zM812 465h7v1h-7zM819 466h7v1h-7zM826 467h7v1h-7zM833 468h5v1h-5zM838 469h4v1h-4zM842 470h3v1h-3zM845 471h2v1h-2zM847 472h2v1h-2zM849 473h3v1h-3zM852 474h4v1h-4zM856 475h3v1h-3zM859 476h2v1h-2zM861 477h2v1h-2zM863 478h3v1h-3zM866 479h2v1h-2zM868 480h3v1h-3zM871 481h3v1h-3zM874 482h2v1h-2zM876 483h2v1h-2zM878 484h3v1h-3zM881 485h4v1h-4zM885 486h5v1h-5zM890 487h7v1h-7zM897 488h7v1h-7zM904 489h26v1h-26zM929 488h1v1h-1zM930 485h1v3h-1zM931 481h1v4h-1zM932 478h1v3h-1zM933 475h1v3h-1zM934 471h1v4h-1zM935 468h1v3h-1zM936 467h1v1h-1zM936 466h115v1h-115z" fill="#00ff00"/>
<path d="M2 465h17v1h-17zM2 466h19v1h-19zM18 467h5v1h-5zM20 468h14v1h-14zM22 469h6v1h-6zM27 467h9v1h-9zM33 466h5v1h-5zM35 465h8v1h-8zM37 464h13v1h-13zM42 463h15v1h-15zM49 462h13v1h-13zM56 461h10v1h-10zM61 460h8v1h-8zM65 459h8v1h-8zM68 458h8v1h-8zM72 457h6v1h-6zM75 456h5v1h-5zM77 455h6v1h-6zM79 454h6v1h-6zM82 453h5v1h-5zM84 452h6v1h-6zM86 451h8v1h-8zM89 450h15v1h-15zM93 449h11v1h-11zM102 451h3v1h-3zM103 452h2v1h-2zM103 453h3v1h-3zM104 454h2v1h-2zM104 455h3v1h-3zM105 456h2v1h-2zM105 457h3v1h-3zM106 458h2v2h-2zM106 460h3v1h-3zM107 461h2v1h-2zM107 462h3v1h-3zM108 463h2v1h-2zM108 464h3v1h-3zM109 465h9v2h-9zM116 464h3v1h-3zM117 463h2v1h-2zM117 462h3v1h-3zM118 460h2v2h-2zM118 459h3v1h-3zM119 458h2v1h-2zM119 457h3v1h-3zM120 455h2v2h-2zM120 454h3v1h-3zM121 452h2v2h-2zM121 451h3v1h-3zM122 450h2v1h-2zM122 449h3v1h-3zM123 448h3v1h-3zM123 447h7v1h-7zM125 446h8v1h-8zM129 445h6v1h-6zM132 444h5v1h-5zM134 443h6v1h-6zM136 442h8v1h-8zM139 441h8v1h-8zM143 440h6v1h-6zM146 439h6v1h-6zM148 438h7v1h-7zM151 437h6v1h-6zM154 436h5v1h-5zM156 435h6v1h-6zM158 434h8v1h-8zM161 433h8v1h-8zM165 432h6v1h-6zM168 431h5v1h-5zM170 430h6v1h-6zM172 429h8v1h-8zM175 428h8v1h-8zM179 427h6v1h-6zM182 426h5v1h-5zM184 425h6v1h-6zM186 424h10v1h-10zM189 423h7v1h-7zM193 422h3v1h-3zM194 425h2v1h-2zM194 426h3v1h-3zM195 427h2v5h-2zM195 432h3v1h-3zM196 433h2v5h-2zM196 438h3v1h-3zM197 439h2v5h-2zM197 444h3v1h-3zM198 445h2v5h-2zM198 450h3v1h-3zM199 451h2v5h-2zM199 456h3v1h-3zM200 457h2v5h-2zM200 462h3v1h-3zM201 463h2v2h-2zM201 465h159v2h-159zM358 467h2v1h-2zM358 468h3v1h-3zM359 469h2v3h-2zM359 472h3v1h-3zM360 473h2v4h-2zM360 477h3v1h-3zM361 478h2v3h-2zM361 481h3v1h-3zM362 482h2v3h-2zM362 485h3v1h-3zM363 486h2v4h-2zM363 490h3v1h-3zM364 491h2v3h-2zM364 494h3v1h-3zM365 495h2v1h-2zM365 497h5v1h-5zM365 496h17v1h-17zM369 495h17v1h-17zM381 494h8v1h-8zM385 493h8v1h-8zM388 492h9v1h-9zM392 491h7v1h-7zM396 490h5v1h-5zM398 489h6v1h-6zM400 488h8v1h-8zM403 487h8v1h-8zM407 486h6v1h-6zM410 485h5v1h-5zM412 484h6v1h-6zM414 483h8v1h-8zM417 482h8v1h-8zM421 481h8v1h-8zM424 480h8v1h-8zM428 479h8v1h-8zM431 478h8v1h-8zM435 477h8v1h-8zM438 476h8v1h-8zM442 475h6v1h-6zM445 474h6v1h-6zM447 473h7v1h-7zM450 472h6v1h-6zM453 471h5v1h-5zM455 470h6v1h-6zM457 469h8v1h-8zM460 468h8v1h-8zM464 467h8v1h-8zM467 466h50v1h-50zM471 465h46v1h-46zM515 467h3v1h-3zM516 468h2v2h-2zM516 470h3v1h-3zM517 471h2v2h-2zM517 473h3v1h-3zM518 474h2v2h-2zM518 476h3v1h-3zM519 477h2v2h-2zM519 479h3v1h-3zM520 480h2v2h-2zM520 482h3v1h-3zM521 483h2v2h-2zM521 485h3v1h-3zM522 487h5v1h-5zM522 486h10v1h-10zM526 485h8v1h-8zM531 484h5v1h-5zM533 483h6v1h-6zM535 482h8v1h-8zM538 481h8v1h-8zM542 480h8v1h-8zM545 479h10v1h-10zM549 478h13v1h-13zM554 477h15v1h-15zM561 476h23v1h-23zM568 475h23v1h-23zM583 474h22v1h-22zM590 473h22v1h-22zM604 472h12v1h-12zM611 471h6v1h-6zM615 470h3v1h-3zM616 469h4v1h-4zM617 468h4v1h-4zM619 467h3v1h-3zM620 466h12v1h-12zM621 465h10v1h-10zM630 467h3v1h-3zM631 468h3v1h-3zM632 469h3v1h-3zM633 470h3v1h-3zM634 471h3v1h-3zM635 472h20v1h-20zM636 473h5v1h-5zM640 471h22v1h-22zM654 470h15v1h-15zM661 469h13v1h-13zM668 468h8v1h-8zM673 467h5v1h-5zM675 466h8v1h-8zM677 465h4v1h-4zM680 467h6v1h-6zM682 468h16v1h-16zM685 469h11v1h-11zM695 467h5v1h-5zM697 466h63v1h-63zM699 465h60v1h-60zM758 467h3v1h-3zM759 468h3v1h-3zM760 469h3v1h-3zM761 470h2v1h-2zM761 471h3v1h-3zM762 472h3v1h-3zM763 473h8v1h-8zM764 474h3v1h-3zM766 472h8v1h-8zM770 471h8v1h-8zM773 470h8v1h-8zM777 469h8v1h-8zM780 468h7v1h-7zM784 467h5v1h-5zM786 466h5v1h-5zM788 465h5v1h-5zM790 464h5v1h-5zM792 463h7v1h-7zM794 462h17v1h-17zM798 461h11v1h-11zM808 463h5v1h-5zM810 464h5v1h-5zM812 465h75v1h-75zM814 466h73v1h-73zM885 467h3v1h-3zM886 468h2v3h-2zM886 471h3v1h-3zM887 472h2v3h-2zM887 475h3v1h-3zM888 476h2v3h-2zM888 479h3v1h-3zM889 480h2v3h-2zM889 483h3v1h-3zM890 484h2v3h-2zM890 487h3v1h-3zM891 488h2v3h-2zM891 491h3v1h-3zM892 493h17v1h-17zM892 492h21v1h-21zM908 491h10v1h-10zM912 490h21v1h-21zM917 489h21v1h-21zM932 488h10v1h-10zM937 487h8v1h-8zM941 486h8v1h-8zM944 485h10v1h-10zM948 484h13v1h-13zM953 483h15v1h-15zM960 482h12v1h-12zM967 481h7v1h-7zM971 480h5v1h-5zM973 479h5v1h-5zM975 478h5v1h-5zM977 477h7v1h-7zM979 476h11v1h-11zM983 475h14v1h-14zM989 474h12v1h-12zM996 473h7v1h-7zM1000 472h5v1h-5zM1002 471h5v1h-5zM1004 470h5v1h-5zM1006 469h7v1h-7zM1008 468h17v1h-17zM1012 467h18v1h-18zM1024 466h8v1h-8zM1029 465h5v1h-5zM1031 464h6v1h-6zM1033 463h8v1h-8zM1036 462h10v1h-10zM1040 461h11v1h-11zM1045 460h6v1h-6z" fill="#ffffff"/>
<path d="M2 467h5v1h-5zM2 468h19v1h-19zM6 469h13v1h-13zM18 467h5v1h-5zM20 466h84v1h-84zM22 465h82v1h-82zM102 464h3v1h-3zM103 463h2v1h-2zM103 462h3v1h-3zM104 460h2v2h-2zM104 459h3v1h-3zM105 458h2v1h-2zM105 457h3v1h-3zM106 456h2v1h-2zM106 455h3v1h-3zM107 453h2v2h-2zM107 452h3v1h-3zM108 451h2v1h-2zM108 450h3v1h-3zM109 448h9v2h-9zM116 450h3v1h-3zM117 451h2v1h-2zM117 452h3v1h-3zM118 453h2v2h-2zM118 455h3v1h-3zM119 456h2v1h-2zM119 457h3v1h-3zM120 458h2v1h-2zM120 459h3v1h-3zM121 460h2v2h-2zM121 462h3v1h-3zM122 463h2v1h-2zM122 464h3v1h-3zM123 465h73v2h-73zM194 464h2v1h-2zM194 463h3v1h-3zM195 458h2v5h-2zM195 457h3v1h-3zM196 452h2v5h-2zM196 451h3v1h-3zM197 446h2v5h-2zM197 445h3v1h-3zM198 440h2v5h-2zM198 439h3v1h-3zM199 434h2v5h-2zM199 433h3v1h-3zM200 428h2v5h-2zM200 427h3v1h-3zM201 426h2v1h-2zM201 423h3v1h-3zM201 424h5v1h-5zM201 425h8v1h-8zM205 426h6v1h-6zM208 427h4v1h-4zM210 428h3v1h-3zM211 429h3v1h-3zM212 430h3v1h-3zM213 431h3v1h-3zM214 432h3v1h-3zM215 433h3v1h-3zM216 434h3v1h-3zM217 435h3v1h-3zM218 436h3v1h-3zM219 437h3v1h-3zM220 438h2v1h-2zM220 439h3v1h-3zM221 440h3v1h-3zM222 441h3v1h-3zM223 442h3v1h-3zM224 443h3v1h-3zM225 444h3v1h-3zM226 445h3v1h-3zM227 446h2v1h-2zM227 447h3v1h-3zM228 448h3v1h-3zM229 449h3v1h-3zM230 450h3v1h-3zM231 451h3v1h-3zM232 452h3v1h-3zM233 453h3v1h-3zM234 454h2v1h-2zM234 455h3v1h-3zM235 456h3v1h-3zM236 457h3v1h-3zM237 458h3v1h-3zM238 459h3v1h-3zM239 460h3v1h-3zM240 461h3v1h-3zM241 462h2v1h-2zM241 463h3v1h-3zM242 464h3v1h-3zM243 465h3v1h-3zM244 466h3v1h-3zM245 467h3v1h-3zM246 468h4v1h-4zM247 469h4v1h-4zM249 470h3v1h-3zM250 471h3v1h-3zM251 472h4v1h-4zM252 473h4v1h-4zM254 474h3v1h-3zM255 475h4v1h-4zM256 476h4v1h-4zM258 477h4v1h-4zM259 478h5v1h-5zM261 479h5v1h-5zM263 480h5v1h-5zM265 481h5v1h-5zM267 482h6v1h-6zM269 483h7v1h-7zM272 484h6v1h-6zM275 485h5v1h-5zM277 486h6v1h-6zM279 487h8v1h-8zM282 488h8v1h-8zM286 489h6v1h-6zM289 490h5v1h-5zM291 491h8v1h-8zM293 492h13v1h-13zM298 493h15v1h-15zM305 494h15v1h-15zM312 495h23v1h-23zM319 496h41v1h-41zM334 497h26v1h-26zM358 495h2v1h-2zM358 494h3v1h-3zM359 491h2v3h-2zM359 490h3v1h-3zM360 486h2v4h-2zM360 485h3v1h-3zM361 482h2v3h-2zM361 481h3v1h-3zM362 478h2v3h-2zM362 477h3v1h-3zM363 473h2v4h-2zM363 472h3v1h-3zM364 469h2v3h-2zM364 468h3v1h-3zM365 467h2v1h-2zM365 465h102v1h-102zM365 466h104v1h-104zM466 467h5v1h-5zM468 468h5v1h-5zM470 469h4v1h-4zM472 470h4v1h-4zM473 471h5v1h-5zM475 472h5v1h-5zM477 473h4v1h-4zM479 474h4v1h-4zM480 475h4v1h-4zM482 476h3v1h-3zM483 477h4v1h-4zM484 478h4v1h-4zM486 479h4v1h-4zM487 480h5v1h-5zM489 481h5v1h-5zM491 482h5v1h-5zM493 483h5v1h-5zM495 484h5v1h-5zM497 485h6v1h-6zM499 486h8v1h-8zM502 487h11v1h-11zM506 488h11v1h-11zM512 489h5v1h-5zM515 487h3v1h-3zM516 485h2v2h-2zM516 484h3v1h-3zM517 481h2v3h-2zM517 480h3v1h-3zM518 478h2v2h-2zM518 477h3v1h-3zM519 475h2v2h-2zM519 474h3v1h-3zM520 471h2v3h-2zM520 470h3v1h-3zM521 468h2v2h-2zM521 467h3v1h-3zM522 465h94v1h-94zM522 466h95v1h-95zM615 467h3v1h-3zM616 468h3v1h-3zM617 469h3v1h-3zM618 470h2v1h-2zM618 471h3v1h-3zM619 472h3v1h-3zM620 473h12v1h-12zM621 474h10v1h-10zM630 472h3v1h-3zM631 471h3v1h-3zM632 470h3v1h-3zM633 469h2v1h-2zM633 468h3v1h-3zM634 467h3v1h-3zM635 466h40v1h-40zM636 465h37v1h-37zM672 467h5v1h-5zM674 468h10v1h-10zM676 469h6v1h-6zM678 470h2v1h-2zM681 467h5v1h-5zM683 466h15v1h-15zM685 465h11v1h-11zM695 467h5v1h-5zM697 468h8v1h-8zM699 469h27v1h-27zM704 470h34v1h-34zM725 471h17v1h-17zM737 472h10v1h-10zM741 473h19v1h-19zM746 474h13v1h-13zM758 472h3v1h-3zM759 471h3v1h-3zM760 470h3v1h-3zM761 469h2v1h-2zM761 468h3v1h-3zM762 467h3v1h-3zM763 466h46v1h-46zM764 465h47v1h-47zM808 464h5v1h-5zM810 463h10v1h-10zM812 462h6v1h-6zM814 461h2v1h-2zM817 464h5v1h-5zM819 465h4v1h-4zM821 466h4v1h-4zM822 467h4v1h-4zM824 468h3v1h-3zM825 469h4v1h-4zM826 470h4v1h-4zM828 471h4v1h-4zM829 472h4v1h-4zM831 473h3v1h-3zM832 474h4v1h-4zM833 475h4v1h-4zM835 476h4v1h-4zM836 477h5v1h-5zM838 478h5v1h-5zM840 479h4v1h-4zM842 480h4v1h-4zM843 481h4v1h-4zM845 482h3v1h-3zM846 483h4v1h-4zM847 484h4v1h-4zM849 485h4v1h-4zM850 486h5v1h-5zM852 487h5v1h-5zM854 488h5v1h-5zM856 489h7v1h-7zM858 490h8v1h-8zM862 491h8v1h-8zM865 492h22v1h-22zM869 493h18v1h-18zM885 491h3v1h-3zM886 488h2v3h-2zM886 487h3v1h-3zM887 484h2v3h-2zM887 483h3v1h-3zM888 480h2v3h-2zM888 479h3v1h-3zM889 476h2v3h-2zM889 475h3v1h-3zM890 472h2v3h-2zM890 471h3v1h-3zM891 468h2v3h-2zM891 467h3v1h-3zM892 465h159v2h-159z" fill="#0000ff"/>
<path d="M3 564h1v1h-1zM4 563h1v1h-1zM5 562h1v1h-1zM6 561h2v1h-2zM8 560h1v1h-1zM9 559h1v1h-1zM10 558h8v1h-8zM18 559h1v1h-1zM19 560h1v1h-1zM20 561h1v1h-1zM21 562h1v2h-1zM22 564h1v1h-1zM23 565h1v1h-1zM24 566h1v1h-1zM25 567h1v1h-1zM26 568h1v1h-1zM27 569h2v1h-2zM29 570h1v1h-1zM30 571h1v1h-1zM31 572h1v1h-1zM32 573h1v1h-1zM33 574h1v1h-1zM34 575h1v1h-1zM35 576h1v1h-1zM36 577h1v1h-1zM37 578h1v1h-1zM38 579h2v1h-2zM40 580h2v1h-2zM42 581h2v1h-2zM44 582h2v1h-2zM46 583h2v1h-2zM48 584h2v1h-2zM50 585h2v1h-2zM52 586h2v1h-2zM54 587h2v1h-2zM56 588h1v1h-1zM57 589h2v1h-2zM59 590h1v1h-1zM60 591h2v1h-2zM62 592h3v1h-3zM65 593h6v1h-6zM71 594h5v1h-5zM76 595h2v1h-2zM78 596h2v1h-2zM80 597h3v1h-3zM83 596h2v1h-2zM85 595h2v1h-2zM87 594h5v1h-5zM92 593h8v1h-8zM100 592h4v1h-4zM104 591h1v1h-1zM105 589h1v2h-1zM106 588h1v1h-1zM107 587h1v1h-1zM108 585h1v2h-1zM109 584h1v1h-1zM110 583h2v1h-2zM112 582h2v1h-2zM114 581h2v1h-2zM116 580h2v1h-2zM118 581h1v1h-1zM119 582h1v1h-1zM120 583h1v1h-1zM121 584h1v1h-1zM122 585h1v1h-1zM123 586h1v1h-1zM124 587h1v1h-1zM125 588h1v1h-1zM126 589h1v1h-1zM127 590h1v1h-1zM128 591h1v2h-1zM129 593h1v1h-1zM130 594h1v1h-1zM131 595h1v1h-1zM132 596h1v1h-1zM133 597h1v1h-1zM134 598h1v1h-1zM135 599h1v1h-1zM136 600h1v1h-1zM137 601h1v1h-1zM138 602h1v1h-1zM139 603h2v1h-2zM141 604h2v1h-2zM143 605h2v1h-2zM145 606h2v1h-2zM147 605h2v1h-2zM149 604h2v1h-2zM151 603h2v1h-2zM153 602h4v1h-4zM157 603h5v1h-5zM162 604h4v1h-4zM166 605h5v1h-5zM171 606h5v1h-5zM176 605h2v1h-2zM178 604h2v1h-2zM180 603h2v1h-2zM182 604h2v1h-2zM184 605h1v1h-1zM185 606h1v1h-1zM186 607h2v1h-2zM188 608h1v2h-1zM189 610h1v2h-1zM190 612h1v3h-1zM191 615h1v2h-1zM192 617h1v2h-1zM193 619h1v3h-1zM194 622h1v2h-1zM195 624h1v1h-1zM195 625h2v1h-2zM197 626h2v1h-2zM199 627h2v1h-2zM201 628h2v1h-2zM202 627h1v1h-1zM203 625h1v2h-1zM204 623h1v2h-1zM205 621h1v2h-1zM206 618h1v3h-1zM207 616h1v2h-1zM208 614h1v2h-1zM209 612h1v2h-1zM210 609h1v3h-1zM211 605h1v4h-1zM212 602h1v3h-1zM213 598h1v4h-1zM214 594h1v4h-1zM215 591h1v3h-1zM216 587h1v4h-1zM217 584h1v3h-1zM218 582h1v2h-1zM219 580h1v2h-1zM220 577h1v3h-1zM221 574h1v3h-1zM222 572h1v2h-1zM223 569h1v3h-1zM224 566h1v3h-1zM225 564h1v2h-1zM226 562h1v2h-1zM227 560h1v2h-1zM228 559h1v1h-1zM229 557h1v2h-1zM230 555h1v2h-1zM231 553h1v2h-1zM232 552h1v1h-1zM233 551h1v1h-1zM234 550h1v1h-1zM235 549h2v1h-2zM237 548h1v1h-1zM238 547h1v1h-1zM239 546h1v1h-1zM240 545h2v1h-2zM242 544h2v1h-2zM244 543h2v1h-2zM246 542h8v1h-8zM254 543h2v1h-2zM256 544h2v1h-2zM258 545h5v1h-5zM263 546h5v1h-5zM268 547h2v1h-2zM270 548h2v1h-2zM272 549h2v1h-2zM274 550h1v1h-1zM275 551h2v1h-2zM277 552h2v1h-2zM279 553h2v1h-2zM281 554h2v1h-2zM283 555h4v1h-4zM287 556h3v1h-3zM290 557h4v1h-4zM294 558h3v1h-3zM297 559h4v1h-4zM301 560h3v1h-3zM304 561h2v1h-2zM306 562h2v1h-2zM308 563h3v1h-3zM311 564h2v1h-2zM313 565h6v1h-6zM319 564h7v1h-7zM326 565h2v1h-2zM328 566h3v1h-3zM331 567h2v1h-2zM333 568h4v1h-4zM337 569h5v1h-5zM342 570h6v1h-6zM348 569h17v1h-17zM365 570h3v1h-3zM368 571h3v1h-3zM371 572h2v1h-2zM373 573h2v1h-2zM375 574h2v1h-2zM377 575h2v1h-2zM379 576h1v1h-1zM380 577h2v1h-2zM382 578h1v1h-1zM383 579h2v1h-2zM385 580h2v1h-2zM387 581h3v1h-3zM390 582h4v1h-4zM394 583h4v1h-4zM398 584h20v1h-20zM418 585h4v1h-4zM422 586h6v1h-6zM428 585h5v1h-5zM433 586h4v1h-4zM437 587h4v1h-4zM441 588h6v1h-6zM447 587h6v1h-6zM453 588h1v1h-1zM454 589h1v1h-1zM455 590h1v1h-1zM456 591h1v2h-1zM457 593h1v1h-1zM458 594h1v1h-1zM459 595h1v1h-1zM460 596h1v1h-1zM461 597h1v1h-1zM462 598h1v1h-1zM463 599h1v2h-1zM464 601h1v1h-1zM465 602h1v1h-1zM466 603h1v1h-1zM467 602h1v1h-1zM468 601h1v1h-1zM469 600h2v1h-2zM471 599h1v1h-1zM472 598h1v1h-1zM473 597h1v1h-1zM474 596h1v1h-1zM475 594h1v2h-1zM476 593h1v1h-1zM477 592h1v1h-1zM478 590h1v2h-1zM479 589h1v1h-1zM480 588h1v1h-1zM481 587h1v1h-1zM482 586h1v1h-1zM483 585h1v1h-1zM484 584h2v1h-2zM486 583h1v1h-1zM487 582h1v1h-1zM488 581h1v1h-1zM489 580h2v1h-2zM491 579h2v1h-2zM493 578h2v1h-2zM495 577h2v1h-2zM497 576h3v1h-3zM500 575h12v1h-12zM512 576h4v1h-4zM516 577h3v1h-3zM519 578h2v1h-2zM521 579h2v1h-2zM523 580h4v1h-4zM527 581h13v1h-13zM540 580h3v1h-3zM543 579h4v1h-4zM547 578h10v1h-10zM557 577h2v1h-2zM559 576h2v1h-2zM561 575h3v1h-3zM564 574h2v1h-2zM566 573h3v1h-3zM569 572h2v1h-2zM571 571h17v1h-17zM588 572h7v1h-7zM595 573h5v1h-5zM600 574h4v1h-4zM604 575h29v1h-29zM633 576h2v1h-2zM635 577h3v1h-3zM638 578h3v1h-3zM641 579h9v1h-9zM650 580h2v1h-2zM652 581h2v1h-2zM654 582h2v1h-2zM656 583h2v1h-2zM658 584h17v1h-17zM675 583h4v1h-4zM679 582h3v1h-3zM682 583h2v1h-2zM684 584h3v1h-3zM687 585h5v1h-5zM692 584h4v1h-4zM696 583h2v1h-2zM698 582h2v1h-2zM700 581h2v1h-2zM702 580h2v1h-2zM704 579h2v1h-2zM706 578h2v1h-2zM708 577h3v1h-3zM711 576h8v1h-8zM719 575h14v1h-14zM733 574h12v1h-12zM745 573h8v1h-8zM753 574h5v1h-5zM758 575h4v1h-4zM762 576h2v1h-2zM764 577h3v1h-3zM767 578h4v1h-4zM771 579h6v1h-6zM777 580h3v1h-3zM780 581h1v1h-1zM781 582h1v1h-1zM782 583h1v1h-1zM783 584h1v2h-1zM784 586h1v1h-1zM785 587h1v1h-1zM786 588h1v1h-1zM787 589h1v1h-1zM788 590h1v1h-1zM789 591h1v1h-1zM790 592h1v1h-1zM791 593h1v1h-1zM792 594h1v1h-1zM793 595h1v1h-1zM794 596h1v1h-1zM795 597h2v1h-2zM797 598h1v1h-1zM798 599h1v1h-1zM799 600h2v1h-2zM801 601h10v1h-10zM811 600h2v1h-2zM813 599h2v1h-2zM815 598h2v1h-2zM817 597h1v1h-1zM818 596h1v1h-1zM819 594h1v2h-1zM820 593h1v1h-1zM821 592h1v1h-1zM822 590h1v2h-1zM823 589h1v1h-1zM824 588h1v1h-1zM825 586h1v2h-1zM826 585h1v1h-1zM827 584h1v1h-1zM828 582h1v2h-1zM829 581h1v1h-1zM830 579h1v2h-1zM831 578h1v1h-1zM832 576h1v2h-1zM833 575h1v1h-1zM834 573h1v2h-1zM835 572h1v1h-1zM836 570h1v2h-1zM837 569h1v1h-1zM838 568h2v1h-2zM840 567h1v1h-1zM841 566h2v1h-2zM843 565h2v1h-2zM845 564h2v1h-2zM847 563h4v1h-4zM851 562h4v1h-4zM855 561h6v1h-6zM861 562h7v1h-7zM868 563h4v1h-4zM872 564h4v1h-4zM876 565h2v1h-2zM878 566h2v1h-2zM880 567h2v1h-2zM882 568h2v1h-2zM884 569h12v1h-12zM896 570h3v1h-3zM899 571h3v1h-3zM902 572h3v1h-3zM905 573h27v1h-27zM932 574h3v1h-3zM935 575h2v1h-2zM937 576h2v1h-2zM939 577h2v1h-2zM941 578h1v1h-1zM942 579h2v1h-2zM944 580h2v1h-2zM946 581h10v1h-10zM956 580h4v1h-4zM960 579h10v1h-10zM970 580h2v1h-2zM972 581h3v1h-3zM975 582h2v1h-2zM977 583h11v1h-11zM988 582h4v1h-4zM992 581h9v1h-9zM1001 582h2v1h-2zM1003 583h2v1h-2zM1005 584h2v1h-2zM1007 585h3v1h-3zM1010 586h7v1h-7zM1017 585h5v1h-5zM1022 584h2v1h-2zM1024 583h3v1h-3zM1027 582h3v1h-3zM1030 583h4v1h-4zM1034 584h4v1h-4zM1038 585h2v1h-2zM1040 586h3v1h-3zM1043 587h4v1h-4zM1047 588h4v1h-4z" fill="#ffffff"/>
<path d="M3 592h1v1h-1zM4 593h1v1h-1zM5 594h1v1h-1zM6 595h2v1h-2zM8 596h1v1h-1zM9 597h1v1h-1zM10 598h8v1h-8zM18 597h1v1h-1zM19 596h1v1h-1zM20 595h1v1h-1zM21 593h1v2h-1zM22 592h1v1h-1zM23 591h1v1h-1zM24 590h1v1h-1zM25 589h1v1h-1zM26 588h1v1h-1zM27 587h2v1h-2zM29 586h1v1h-1zM30 585h1v1h-1zM31 584h1v1h-1zM32 583h1v1h-1zM33 582h1v1h-1zM34 581h1v1h-1zM35 580h1v1h-1zM36 579h1v1h-1zM37 578h1v1h-1zM38 577h2v1h-2zM40 576h2v1h-2zM42 575h2v1h-2zM44 574h2v1h-2zM46 573h2v1h-2zM48 572h2v1h-2zM50 571h2v1h-2zM52 570h2v1h-2zM54 569h2v1h-2zM56 568h1v1h-1zM57 567h2v1h-2zM59 566h1v1h-1zM60 565h2v1h-2zM62 564h3v1h-3zM65 563h6v1h-6zM71 562h5v1h-5zM76 561h2v1h-2zM78 560h2v1h-2zM80 559h3v1h-3zM83 560h2v1h-2zM85 561h2v1h-2zM87 562h5v1h-5zM92 563h8v1h-8zM100 564h4v1h-4zM104 565h1v1h-1zM105 566h1v2h-1zM106 568h1v1h-1zM107 569h1v1h-1zM108 570h1v2h-1zM109 572h1v1h-1zM110 573h2v1h-2zM112 574h2v1h-2zM114 575h2v1h-2zM116 576h2v1h-2zM118 575h1v1h-1zM119 574h1v1h-1zM120 573h1v1h-1zM121 572h1v1h-1zM122 571h1v1h-1zM123 570h1v1h-1zM124 569h1v1h-1zM125 568h1v1h-1zM126 567h1v1h-1zM127 566h1v1h-1zM128 564h1v2h-1zM129 563h1v1h-1zM130 562h1v1h-1zM131 561h1v1h-1zM132 560h1v1h-1zM133 559h1v1h-1zM134 558h1v1h-1zM135 557h1v1h-1zM136 556h1v1h-1zM137 555h1v1h-1zM138 554h1v1h-1zM139 553h2v1h-2zM141 552h2v1h-2zM143 551h2v1h-2zM145 550h2v1h-2zM147 551h2v1h-2zM149 552h2v1h-2zM151 553h2v1h-2zM153 554h4v1h-4zM157 553h5v1h-5zM162 552h4v1h-4zM166 551h5v1h-5zM171 550h5v1h-5zM176 551h2v1h-2zM178 552h2v1h-2zM180 553h2v1h-2zM182 552h2v1h-2zM184 551h1v1h-1zM185 550h1v1h-1zM186 549h2v1h-2zM188 547h1v2h-1zM189 545h1v2h-1zM190 542h1v3h-1zM191 540h1v2h-1zM192 538h1v2h-1zM193 535h1v3h-1zM194 533h1v2h-1zM195 532h1v1h-1zM195 531h2v1h-2zM197 530h2v1h-2zM199 529h2v1h-2zM201 528h2v1h-2zM202 529h1v1h-1zM203 530h1v2h-1zM204 532h1v2h-1zM205 534h1v2h-1zM206 536h1v3h-1zM207 539h1v2h-1zM208 541h1v2h-1zM209 543h1v2h-1zM210 545h1v3h-1zM211 548h1v4h-1zM212 552h1v3h-1zM213 555h1v4h-1zM214 559h1v4h-1zM215 563h1v3h-1zM216 566h1v4h-1zM217 570h1v3h-1zM218 573h1v2h-1zM219 575h1v2h-1zM220 577h1v3h-1zM221 580h1v3h-1zM222 583h1v2h-1zM223 585h1v3h-1zM224 588h1v3h-1zM225 591h1v2h-1zM226 593h1v2h-1zM227 595h1v2h-1zM228 597h1v1h-1zM229 598h1v2h-1zM230 600h1v2h-1zM231 602h1v2h-1zM232 604h1v1h-1zM233 605h1v1h-1zM234 606h1v1h-1zM235 607h2v1h-2zM237 608h1v1h-1zM238 609h1v1h-1zM239 610h1v1h-1zM240 611h2v1h-2zM242 612h2v1h-2zM244 613h2v1h-2zM246 614h8v1h-8zM254 613h2v1h-2zM256 612h2v1h-2zM258 611h5v1h-5zM263 610h5v1h-5zM268 609h2v1h-2zM270 608h2v1h-2zM272 607h2v1h-2zM274 606h1v1h-1zM275 605h2v1h-2zM277 604h2v1h-2zM279 603h2v1h-2zM281 602h2v1h-2zM283 601h4v1h-4zM287 600h3v1h-3zM290 599h4v1h-4zM294 598h3v1h-3zM297 597h4v1h-4zM301 596h3v1h-3zM304 595h2v1h-2zM306 594h2v1h-2zM308 593h3v1h-3zM311 592h2v1h-2zM313 591h6v1h-6zM319 592h7v1h-7zM326 591h2v1h-2zM328 590h3v1h-3zM331 589h2v1h-2zM333 588h4v1h-4zM337 587h5v1h-5zM342 586h6v1h-6zM348 587h17v1h-17zM365 586h3v1h-3zM368 585h3v1h-3zM371 584h2v1h-2zM373 583h2v1h-2zM375 582h2v1h-2zM377 581h2v1h-2zM379 580h1v1h-1zM380 579h2v1h-2zM382 578h1v1h-1zM383 577h2v1h-2zM385 576h2v1h-2zM387 575h3v1h-3zM390 574h4v1h-4zM394 573h4v1h-4zM398 572h20v1h-20zM418 571h4v1h-4zM422 570h6v1h-6zM428 571h5v1h-5zM433 570h4v1h-4zM437 569h4v1h-4zM441 568h6v1h-6zM447 569h6v1h-6zM453 568h1v1h-1zM454 567h1v1h-1zM455 566h1v1h-1zM456 564h1v2h-1zM457 563h1v1h-1zM458 562h1v1h-1zM459 561h1v1h-1zM460 560h1v1h-1zM461 559h1v1h-1zM462 558h1v1h-1zM463 556h1v2h-1zM464 555h1v1h-1zM465 554h1v1h-1zM466 553h1v1h-1zM467 554h1v1h-1zM468 555h1v1h-1zM469 556h2v1h-2zM471 557h1v1h-1zM472 558h1v1h-1zM473 559h1v1h-1zM474 560h1v1h-1zM475 561h1v2h-1zM476 563h1v1h-1zM477 564h1v1h-1zM478 565h1v2h-1zM479 567h1v1h-1zM480 568h1v1h-1zM481 569h1v1h-1zM482 570h1v1h-1zM483 571h1v1h-1zM484 572h2v1h-2zM486 573h1v1h-1zM487 574h1v1h-1zM488 575h1v1h-1zM489 576h2v1h-2zM491 577h2v1h-2zM493 578h2v1h-2zM495 579h2v1h-2zM497 580h3v1h-3zM500 581h12v1h-12zM512 580h4v1h-4zM516 579h3v1h-3zM519 578h2v1h-2zM521 577h2v1h-2zM523 576h4v1h-4zM527 575h13v1h-13zM540 576h3v1h-3zM543 577h4v1h-4zM547 578h10v1h-10zM557 579h2v1h-2zM559 580h2v1h-2zM561 581h3v1h-3zM564 582h2v1h-2zM566 583h3v1h-3zM569 584h2v1h-2zM571 585h17v1h-17zM588 584h7v1h-7zM595 583h5v1h-5zM600 582h4v1h-4zM604 581h29v1h-29zM633 580h2v1h-2zM635 579h3v1h-3zM638 578h3v1h-3zM641 577h9v1h-9zM650 576h2v1h-2zM652 575h2v1h-2zM654 574h2v1h-2zM656 573h2v1h-2zM658 572h17v1h-17zM675 573h4v1h-4zM679 574h3v1h-3zM682 573h2v1h-2zM684 572h3v1h-3zM687 571h5v1h-5zM692 572h4v1h-4zM696 573h2v1h-2zM698 574h2v1h-2zM700 575h2v1h-2zM702 576h2v1h-2zM704 577h2v1h-2zM706 578h2v1h-2zM708 579h3v1h-3zM711 580h8v1h-8zM719 581h14v1h-14zM733 582h12v1h-12zM745 583h8v1h-8zM753 582h5v1h-5zM758 581h4v1h-4zM762 580h2v1h-2zM764 579h3v1h-3zM767 578h4v1h-4zM771 577h6v1h-6zM777 576h3v1h-3zM780 575h1v1h-1zM781 574h1v1h-1zM782 573h1v1h-1zM783 571h1v2h-1zM784 570h1v1h-1zM785 569h1v1h-1zM786 568h1v1h-1zM787 567h1v1h-1zM788 566h1v1h-1zM789 565h1v1h-1zM790 564h1v1h-1zM791 563h1v1h-1zM792 562h1v1h-1zM793 561h1v1h-1zM794 560h1v1h-1zM795 559h2v1h-2zM797 558h1v1h-1zM798 557h1v1h-1zM799 556h2v1h-2zM801 555h10v1h-10zM811 556h2v1h-2zM813 557h2v1h-2zM815 558h2v1h-2zM817 559h1v1h-1zM818 560h1v1h-1zM819 561h1v2h-1zM820 563h1v1h-1zM821 564h1v1h-1zM822 565h1v2h-1zM823 567h1v1h-1zM824 568h1v1h-1zM825 569h1v2h-1zM826 571h1v1h-1zM827 572h1v1h-1zM828 573h1v2h-1zM829 575h1v1h-1zM830 576h1v2h-1zM831 578h1v1h-1zM832 579h1v2h-1zM833 581h1v1h-1zM834 582h1v2h-1zM835 584h1v1h-1zM836 585h1v2h-1zM837 587h1v1h-1zM838 588h2v1h-2zM840 589h1v1h-1zM841 590h2v1h-2zM843 591h2v1h-2zM845 592h2v1h-2zM847 593h4v1h-4zM851 594h4v1h-4zM855 595h6v1h-6zM861 594h7v1h-7zM868 593h4v1h-4zM872 592h4v1h-4zM876 591h2v1h-2zM878 590h2v1h-2zM880 589h2v1h-2zM882 588h2v1h-2zM884 587h12v1h-12zM896 586h3v1h-3zM899 585h3v1h-3zM902 584h3v1h-3zM905 583h27v1h-27zM932 582h3v1h-3zM935 581h2v1h-2zM937 580h2v1h-2zM939 579h2v1h-2zM941 578h1v1h-1zM942 577h2v1h-2zM944 576h2v1h-2zM946 575h10v1h-10zM956 576h4v1h-4zM960 577h10v1h-10zM970 576h2v1h-2zM972 575h3v1h-3zM975 574h2v1h-2zM977 573h11v1h-11zM988 574h4v1h-4zM992 575h9v1h-9zM1001 574h2v1h-2zM1003 573h2v1h-2zM1005 572h2v1h-2zM1007 571h3v1h-3zM1010 570h7v1h-7zM1017 571h5v1h-5zM1022 572h2v1h-2zM1024 573h3v1h-3zM1027 574h3v1h-3zM1030 573h4v1h-4zM1034 572h4v1h-4zM1038 571h2v1h-2zM1040 570h3v1h-3zM1043 569h4v1h-4zM1047 568h4v1h-4z" fill="#ffff00"/>
<rect x="130" y="630" width="1" height="16" fill="#ba0000"/>
<rect x="265" y="630" width="1" height="16" fill="#ba0000"/>
<rect x="408" y="630" width="1" height="16" fill="#ba0000"/>
<rect x="721" y="630" width="1" height="16" fill="#ba0000"/>
<rect x="878" y="630" width="1" height="16" fill="#ba0000"/>
<rect x="164" y="630" width="1" height="4" fill="#ba0000"/>
<rect x="198" y="630" width="1" height="4" fill="#ba0000"/>
<rect x="232" y="630" width="1" height="4" fill="#ba0000"/>
<rect x="301" y="630" width="1" height="4" fill="#ba0000"/>
<rect x="337" y="630" width="1" height="4" fill="#ba0000"/>
<rect x="372" y="630" width="1" height="4" fill="#ba0000"/>
<rect x="449" y="630" width="1" height="4" fill="#ba0000"/>
<rect x="490" y="630" width="1" height="4" fill="#ba0000"/>
<rect x="531" y="630" width="1" height="4" fill="#ba0000"/>
<rect x="647" y="630" width="1" height="4" fill="#ba0000"/>
<rect x="684" y="630" width="1" height="4" fill="#ba0000"/>
<rect x="760" y="630" width="1" height="4" fill="#ba0000"/>
<rect x="800" y="630" width="1" height="4" fill="#ba0000"/>
<rect x="839" y="630" width="1" height="4" fill="#ba0000"/>
<rect x="908" y="630" width="1" height="4" fill="#ba0000"/>
<rect x="938" y="630" width="1" height="4" fill="#ba0000"/>
<rect x="969" y="630" width="1" height="4" fill="#ba0000"/>
<rect x="1003" y="630" width="1" height="4" fill="#ba0000"/>
<rect x="1038" y="630" width="1" height="4" fill="#ba0000"/>
<rect x="0" y="646" width="1" height="4" fill="#ba0000"/>
<rect x="42" y="646" width="1" height="4" fill="#ba0000"/>
<rect x="73" y="646" width="1" height="4" fill="#ba0000"/>
<rect x="115" y="646" width="1" height="4" fill="#ba0000"/>
<rect x="144" y="646" width="1" height="4" fill="#ba0000"/>
<rect x="177" y="646" width="1" height="4" fill="#ba0000"/>
<rect x="207" y="646" width="1" height="4" fill="#ba0000"/>
<rect x="241" y="646" width="1" height="4" fill="#ba0000"/>
<rect x="282" y="646" width="1" height="4" fill="#ba0000"/>
<rect x="308" y="646" width="1" height="4" fill="#ba0000"/>
<rect x="332" y="646" width="1" height="4" fill="#ba0000"/>
<rect x="364" y="646" width="1" height="4" fill="#ba0000"/>
<rect x="389" y="646" width="1" height="4" fill="#ba0000"/>
<rect x="422" y="646" width="1" height="4" fill="#ba0000"/>
<rect x="480" y="646" width="1" height="4" fill="#ba0000"/>
<rect x="508" y="646" width="1" height="4" fill="#ba0000"/>
<rect x="536" y="646" width="1" height="4" fill="#ba0000"/>
<rect x="568" y="646" width="1" height="4" fill="#ba0000"/>
<rect x="599" y="646" width="1" height="4" fill="#ba0000"/>
<rect x="628" y="646" width="1" height="4" fill="#ba0000"/>
<rect x="663" y="646" width="1" height="4" fill="#ba0000"/>
<rect x="696" y="646" width="1" height="4" fill="#ba0000"/>
<rect x="735" y="646" width="1" height="4" fill="#ba0000"/>
<rect x="766" y="646" width="1" height="4" fill="#ba0000"/>
<rect x="807" y="646" width="1" height="4" fill="#ba0000"/>
<rect x="839" y="646" width="1" height="4" fill="#ba0000"/>
<rect x="871" y="646" width="1" height="4" fill="#ba0000"/>
<rect x="536" y="631" width="79" height="15" fill="#000080"/>
<rect x="536" y="630" width="1" height="16" fill="#ba0000"/>
<rect x="614" y="630" width="1" height="16" fill="#ba0000"/>
<rect x="1076" y="283" width="50" height="17" fill="#000080"/>
<rect x="1076" y="283" width="50" height="1" fill="#d00000"/>
<rect x="1076" y="299" width="50" height="1" fill="#d00000"/>
<path d="M203 388 h10 l3 3 v10 h-13 z" fill="#008000"/>
<path d="M452 388 h10 l3 3 v10 h-13 z" fill="#a05000"/>
<path d="M779 388 h10 l3 3 v10 h-13 z" fill="#8b0000"/>
<path d="M930 388 h10 l3 3 v10 h-13 z" fill="#008000"/>
<path d="M986 388 h10 l3 3 v10 h-13 z" fill="#103a78"/>
<g shape-rendering="auto"><rect x="5.5" y="3.5" width="11" height="10" rx="2.2" fill="none" stroke="#8c8c8c"/></g><rect x="12" y="5" width="3" height="7" fill="#9a9a9a"/>
<g shape-rendering="auto"><rect x="1060.5" y="24.5" width="11" height="10" rx="2.2" fill="none" stroke="#8c8c8c"/></g><rect x="1067" y="26" width="3" height="7" fill="#9a9a9a"/>
<path d="M1047.5 24 l5.5 5.5 -5.5 5.5 -5.5 -5.5z" fill="none" stroke="#8a8a8a" shape-rendering="auto"/>
<g shape-rendering="auto"><circle cx="134" cy="29.1" r="6.1" fill="#808080"/><path d="M130.8 27.8 l3.2 2.9 3.2 -2.9" fill="none" stroke="#0a0a0a" stroke-width="1.2"/></g>
<g shape-rendering="auto"><circle cx="8.1" cy="411.7" r="6.1" fill="#808080"/><path d="M4.8999999999999995 410.4 l3.2 2.9 3.2 -2.9" fill="none" stroke="#0a0a0a" stroke-width="1.2"/></g>
<g shape-rendering="auto"><circle cx="8.1" cy="517.7" r="6.1" fill="#808080"/><path d="M4.8999999999999995 516.4000000000001 l3.2 2.9 3.2 -2.9" fill="none" stroke="#0a0a0a" stroke-width="1.2"/></g>
<g shape-rendering="auto" fill="none" stroke="#c0c0c0"><path d="M202.5 41.5 L206.5 39.5 M202.5 41.5 L205 44.5 M202.5 41.5 L208 42.5 L214 45"/><path d="M17.5 383.5 H29 M17.5 383.5 L21 381 M17.5 383.5 L21 386.5"/></g>
</svg>
<div id="txt">
<div class="t mk" style="left:203px;top:388px">跌</div>
<div class="t mk" style="left:452px;top:388px">榜</div>
<div class="t mk" style="left:779px;top:388px">涨</div>
<div class="t mk" style="left:930px;top:388px">减</div>
<div class="t mk" style="left:986px;top:388px">财</div>
<div class="t " style="left:28px;top:2px;">分时</div>
<div class="t " style="left:61px;top:2px;"><i>1</i>分钟</div>
<div class="t " style="left:100px;top:2px;"><i>5</i>分钟</div>
<div class="t " style="left:139px;top:2px;"><i>15</i>分钟</div>
<div class="t " style="left:185px;top:2px;"><i>30</i>分钟</div>
<div class="t " style="left:231px;top:2px;"><i>60</i>分钟</div>
<div class="t " style="left:278px;top:2px;color:#54ffff">日线</div>
<div class="t " style="left:312px;top:2px;">周线</div>
<div class="t " style="left:346px;top:2px;">月线</div>
<div class="t " style="left:378px;top:2px;">多周期</div>
<div class="t " style="left:422px;top:2px;">更多</div>
<div class="t " style="left:450px;top:2px;">&gt;</div>
<div class="t" style="left:811px;top:2px;width:34px;text-align:center">复权</div>
<div class="t" style="left:845px;top:2px;width:34px;text-align:center">叠加</div>
<div class="t" style="left:880px;top:2px;width:34px;text-align:center">多股</div>
<div class="t" style="left:915px;top:2px;width:34px;text-align:center">统计</div>
<div class="t" style="left:950px;top:2px;width:34px;text-align:center">画线</div>
<div class="t" style="left:985px;top:2px;width:34px;text-align:center">F10</div>
<div class="t" style="left:1020px;top:2px;width:34px;text-align:center">标记</div>
<div class="t" style="left:1055px;top:2px;width:34px;text-align:center">+自选</div>
<div class="t" style="left:1090px;top:2px;width:36px;text-align:center">返回</div>
<div class="t " style="left:3px;top:22px;">华夏幸福<i>(</i>日线<i>.</i>前复权<i>)</i></div>
<div class="t " style="left:217px;top:39px;"><i>3.35</i></div>
<div class="t " style="left:30.5px;top:378px;"><i>1.85</i></div>
<div class="t ax" style="top:68px">3.20</div>
<div class="t ax" style="top:114px">3.00</div>
<div class="t ax" style="top:160px">2.80</div>
<div class="t ax" style="top:206px">2.60</div>
<div class="t ax" style="top:251px">2.40</div>
<div class="t ax" style="top:297px">2.20</div>
<div class="t ax" style="top:343px">2.00</div>
<div class="t ax" style="top:425px">100.0</div>
<div class="t ax" style="top:460px">0.00</div>
<div class="t ax" style="top:542px">0.25</div>
<div class="t ax" style="top:572px">0.00</div>
<div class="t " style="left:1077px;top:284px;color:#e0e0e0"><i>2.22</i></div>
<div class="t " style="left:17px;top:404px;">股朋指标网</div>
<div class="t " style="left:84px;top:404px;color:#fff"><i>DIFF: 16.31</i></div>
<div class="t " style="left:152px;top:404px;color:#ffff00"><i>DEA: -3.83</i></div>
<div class="t " style="left:215px;top:404px;color:#ff00ff"><i>MACD: 40.29</i></div>
<div class="t " style="left:290px;top:404px;color:#dc78aa"><i>: -3.83</i></div>
<div class="t " style="left:330px;top:404px;color:#00ff00"><i>: 0.00</i></div>
<div class="t " style="left:365px;top:404px;color:#fff"><i>: 16.31</i></div>
<div class="t " style="left:407px;top:404px;color:#0000ff"><i>: 0.00</i></div>
<div class="t " style="left:17px;top:510px;">股朋指标</div>
<div class="t " style="left:71px;top:510px;color:#fff">主力弃盘<i>: -0.09</i></div>
<div class="t " style="left:158px;top:510px;color:#ffff00">主力控盘<i>: 0.09</i></div>
<div class="t" style="left:3px;top:632px;color:#ff3232;letter-spacing:0.2px">2025年</div>
<div class="t" style="left:132px;top:632px;color:#ff3232;letter-spacing:0.2px">5</div>
<div class="t" style="left:267px;top:632px;color:#ff3232;letter-spacing:0.2px">6</div>
<div class="t" style="left:410px;top:632px;color:#ff3232;letter-spacing:0.2px">7</div>
<div class="t" style="left:723px;top:632px;color:#ff3232;letter-spacing:0.2px">9</div>
<div class="t" style="left:880px;top:632px;color:#ff3232;letter-spacing:0.2px">10</div>
<div class="t" style="left:538px;top:632px;color:#e0e0e0;letter-spacing:0.1px">2025/07/25/五</div>
<div class="t " style="left:6px;top:648px;color:#e0e0e0">分时</div>
<div class="t " style="left:48px;top:648px;color:#e0e0e0"><i>1</i>分</div>
<div class="t " style="left:843px;top:648px;color:#54ffff">日线</div>
</div>
<div id="wm"><b>指标公式网</b><span>www.zbgs3.com</span></div>
</body></html>
